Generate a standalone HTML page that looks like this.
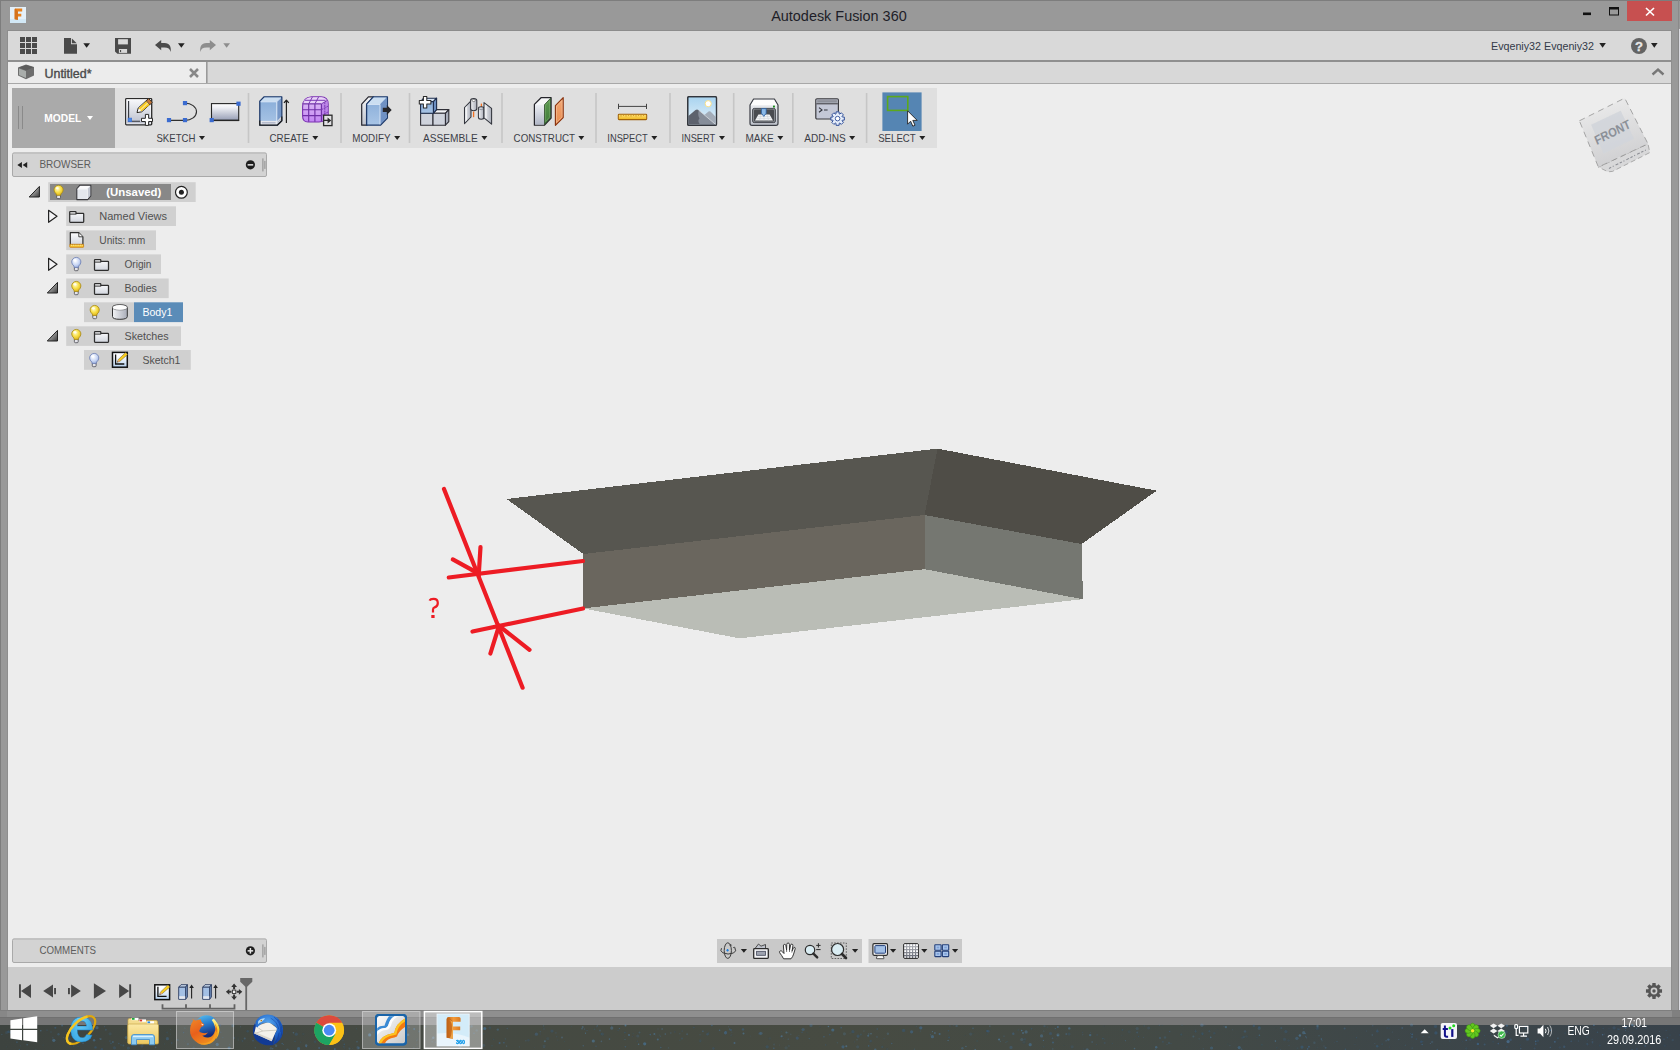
<!DOCTYPE html>
<html><head><meta charset="utf-8"><title>Autodesk Fusion 360</title>
<style>
html,body{margin:0;padding:0;background:#ededed;overflow:hidden}
svg{display:block;font-family:"Liberation Sans",sans-serif}
text{font-family:"Liberation Sans",sans-serif}
</style></head><body>
<svg width="1680" height="1050" viewBox="0 0 1680 1050">
<rect x="0" y="0" width="1680" height="1050" fill="#ededed" />
<rect x="0" y="0" width="1680" height="31" fill="#999999" />
<rect x="0" y="0" width="8" height="1050" fill="#999999" />
<rect x="1671" y="0" width="9" height="1050" fill="#999999" />
<rect x="0" y="0" width="1680" height="1" fill="#7d7d7d" />
<rect x="0" y="0" width="1" height="1050" fill="#7d7d7d" />
<rect x="1679" y="29" width="1" height="981" fill="#dcdce2" />
<rect x="1678" y="0" width="1" height="1050" fill="#8a8a8a" />
<rect x="10" y="7" width="16" height="16" fill="#e4f0f9" />
<rect x="10" y="19" width="16" height="4" fill="#d2e8f6" />
<path d="M14.6 9.4q0-1 1-1h6.6v3.1h-4.3v2.2h3.4v2.8h-3.4v3.4l-3.3-0.7z" fill="#e8821e"/><path d="M14.6 9.4q0-1 1-1l2.3 3.1v8.4l-3.3-0.7z" fill="#c8681a" opacity="0.6"/>
<text x="771.2" y="21" font-size="14.9" fill="#1e1e28" font-weight="400" text-anchor="start" textLength="135.5" lengthAdjust="spacingAndGlyphs" >Autodesk Fusion 360</text>
<rect x="1583" y="12.5" width="8" height="2.6" fill="#111" />
<rect x="1609.5" y="8" width="9" height="7" fill="none" stroke="#111" stroke-width="1"/>
<rect x="1609" y="7" width="10" height="2.5" fill="#111" />
<rect x="1627" y="1" width="45" height="20" fill="#c75050" />
<path d="M1646 8l8 7.5M1654 8l-8 7.5" stroke="#fff" stroke-width="1.7" fill="none"/>
<rect x="8" y="31" width="1663" height="29" fill="#d9d9d9" />
<rect x="8" y="30" width="1663" height="1" fill="#8c8c8c" />
<rect x="8" y="60" width="1663" height="2" fill="#8f8f8f" />
<rect x="7" y="30" width="1" height="980" fill="#8e8e8e" />
<rect x="1671" y="30" width="1" height="980" fill="#8e8e8e" />
<rect x="20" y="37" width="5" height="5" fill="#4a4a4a" />
<rect x="20" y="43" width="5" height="5" fill="#4a4a4a" />
<rect x="20" y="49" width="5" height="5" fill="#4a4a4a" />
<rect x="26" y="37" width="5" height="5" fill="#4a4a4a" />
<rect x="26" y="43" width="5" height="5" fill="#4a4a4a" />
<rect x="26" y="49" width="5" height="5" fill="#4a4a4a" />
<rect x="32" y="37" width="5" height="5" fill="#4a4a4a" />
<rect x="32" y="43" width="5" height="5" fill="#4a4a4a" />
<rect x="32" y="49" width="5" height="5" fill="#4a4a4a" />
<path d="M64 38H71V44.2H77V53.8H64z" fill="#4a4a4a"/><path d="M71.9 38.5L76.7 43.3H71.9z" fill="#4a4a4a"/>
<path d="M83.3 43.2h6.7l-3.35 4.6z" fill="#222"/>
<path d="M115 38h16v15.8h-13.6l-2.4 -2.4z" fill="#4a4a4a"/>
<rect x="118.1" y="39.2" width="9.8" height="5.2" fill="#d9d9d9" />
<rect x="118.9" y="49" width="8.2" height="3.9" fill="#d9d9d9" />
<rect x="120" y="50" width="1.1" height="2.1" fill="#4a4a4a" />
<path d="M155 45L161.2 39.9V43H164.5C169.8 43 171.2 46.8 170.8 51.9C169.9 48.9 168.2 47.5 164.5 47.5H161.2V50.3z" fill="#4a4a4a"/>
<path d="M178 43.2h6.7l-3.35 4.6z" fill="#222"/>
<path d="M216 45L209.8 39.9V43H206.5C201.2 43 199.8 46.8 200.2 51.9C201.1 48.9 202.8 47.5 206.5 47.5H209.8V50.3z" fill="#8d8d8d"/>
<path d="M223.3 43.2h6.7l-3.35 4.6z" fill="#8d8d8d"/>
<text x="1491" y="50" font-size="11" fill="#333a48" font-weight="400" text-anchor="start" textLength="103" lengthAdjust="spacingAndGlyphs" >Evqeniy32 Evqeniy32</text>
<path d="M1599.3 43h6.6l-3.3 4.8z" fill="#222"/>
<circle cx="1639" cy="46" r="8" fill="#636363"/>
<text x="1639" y="50.6" font-size="13" fill="#e8e8e8" font-weight="700" text-anchor="middle" stroke="#e8e8e8" stroke-width="0.3">?</text>
<path d="M1651 43h6.6l-3.3 4.8z" fill="#222"/>
<rect x="8" y="62" width="1663" height="21" fill="#d8d8d8" />
<rect x="8" y="62" width="198" height="21" fill="#ececec" />
<rect x="206" y="62" width="1.6" height="21" fill="#9a9a9a" />
<rect x="8" y="83" width="1663" height="1" fill="#a8a8a8" />
<path d="M18 67.5l8-3 8 2.5v8.5l-8 3.7-8-3.7z" fill="#6e6e6e"/><path d="M19 68.5l7 2.6v7l-7-3.2z" fill="#a9adab"/><path d="M18.6 67.6l7.6-2.7 7.3 2.3-7.4 3.2z" fill="#5c5c5c"/>
<text x="44.5" y="78" font-size="12" fill="#4a4a4a" font-weight="400" text-anchor="start" textLength="47" lengthAdjust="spacingAndGlyphs" stroke="#4a4a4a" stroke-width="0.35">Untitled*</text>
<path d="M190 69l8 8M198 69l-8 8" stroke="#888" stroke-width="2.5" fill="none"/>
<path d="M1652.5 74.5l5.5-5 5.5 5" stroke="#777" stroke-width="2.4" fill="none"/>
<defs>
<linearGradient id="gPlate" x1="0" y1="0" x2="0" y2="1"><stop offset="0" stop-color="#fafbfd"/><stop offset="1" stop-color="#b9bdcc"/></linearGradient>
<linearGradient id="gRect" x1="0" y1="0" x2="0" y2="1"><stop offset="0" stop-color="#ffffff"/><stop offset="0.25" stop-color="#eeeff4"/><stop offset="1" stop-color="#979eb6"/></linearGradient>
<linearGradient id="gBlueF" x1="0" y1="0" x2="0" y2="1"><stop offset="0" stop-color="#86abd8"/><stop offset="1" stop-color="#a9c5e6"/></linearGradient>
<linearGradient id="gGrey" x1="0" y1="0" x2="0" y2="1"><stop offset="0" stop-color="#f4f5f7"/><stop offset="1" stop-color="#bfc3cc"/></linearGradient>
<linearGradient id="gGreyH" x1="0" y1="0" x2="1" y2="0"><stop offset="0" stop-color="#f2f3f5"/><stop offset="1" stop-color="#a9adb8"/></linearGradient>
<linearGradient id="gPurp" x1="0" y1="0" x2="0" y2="1"><stop offset="0" stop-color="#e2c8f4"/><stop offset="1" stop-color="#c384f4"/></linearGradient>
<linearGradient id="gSky" x1="0" y1="0" x2="0" y2="1"><stop offset="0" stop-color="#a8d3ef"/><stop offset="1" stop-color="#e6f2fa"/></linearGradient>
<linearGradient id="gRuler" x1="0" y1="0" x2="0" y2="1"><stop offset="0" stop-color="#ffe27a"/><stop offset="1" stop-color="#f0b81e"/></linearGradient>
<linearGradient id="gGreen" x1="0" y1="0" x2="0" y2="1"><stop offset="0" stop-color="#5c9a52"/><stop offset="1" stop-color="#3f7a3a"/></linearGradient>
<linearGradient id="gOrange" x1="0" y1="0" x2="0" y2="1"><stop offset="0" stop-color="#f2a876"/><stop offset="1" stop-color="#e88a4e"/></linearGradient>
<linearGradient id="gGrey2" x1="0" y1="0" x2="0" y2="1"><stop offset="0" stop-color="#eceef3"/><stop offset="1" stop-color="#b0b6c6"/></linearGradient>
</defs>
<rect x="12" y="88" width="925" height="60" fill="#dfdfdf" />
<rect x="12" y="88" width="103" height="60" fill="#aaaaaa" />
<rect x="18" y="106" width="1" height="23" fill="#8a8a8a" />
<rect x="22" y="106" width="1" height="23" fill="#8a8a8a" />
<text x="44.3" y="122" font-size="10.8" fill="#ffffff" font-weight="700" text-anchor="start" textLength="37" lengthAdjust="spacingAndGlyphs" >MODEL</text>
<path d="M87 116h6l-3.0 4z" fill="#fff"/>
<rect x="247.7" y="93" width="1.6" height="50" fill="#c6c6c6" />
<rect x="340.2" y="93" width="1.6" height="50" fill="#c6c6c6" />
<rect x="408.7" y="93" width="1.6" height="50" fill="#c6c6c6" />
<rect x="501.2" y="93" width="1.6" height="50" fill="#c6c6c6" />
<rect x="595.2" y="93" width="1.6" height="50" fill="#c6c6c6" />
<rect x="669.2" y="93" width="1.6" height="50" fill="#c6c6c6" />
<rect x="732.9000000000001" y="93" width="1.6" height="50" fill="#c6c6c6" />
<rect x="792.0" y="93" width="1.6" height="50" fill="#c6c6c6" />
<rect x="865.8000000000001" y="93" width="1.6" height="50" fill="#c6c6c6" />
<text x="156.4" y="141.9" font-size="10.8" fill="#3d4048" font-weight="400" text-anchor="start" textLength="39" lengthAdjust="spacingAndGlyphs" >SKETCH</text>
<path d="M199 136h6l-3.0 4z" fill="#222"/>
<text x="269.5" y="141.9" font-size="10.8" fill="#3d4048" font-weight="400" text-anchor="start" textLength="39" lengthAdjust="spacingAndGlyphs" >CREATE</text>
<path d="M312.3 136h6l-3.0 4z" fill="#222"/>
<text x="352.3" y="141.9" font-size="10.8" fill="#3d4048" font-weight="400" text-anchor="start" textLength="38.2" lengthAdjust="spacingAndGlyphs" >MODIFY</text>
<path d="M394.2 136h6l-3.0 4z" fill="#222"/>
<text x="423" y="141.9" font-size="10.8" fill="#3d4048" font-weight="400" text-anchor="start" textLength="54.7" lengthAdjust="spacingAndGlyphs" >ASSEMBLE</text>
<path d="M481.4 136h6l-3.0 4z" fill="#222"/>
<text x="513.6" y="141.9" font-size="10.8" fill="#3d4048" font-weight="400" text-anchor="start" textLength="61.4" lengthAdjust="spacingAndGlyphs" >CONSTRUCT</text>
<path d="M578.3 136h6l-3.0 4z" fill="#222"/>
<text x="607.3" y="141.9" font-size="10.8" fill="#3d4048" font-weight="400" text-anchor="start" textLength="40.5" lengthAdjust="spacingAndGlyphs" >INSPECT</text>
<path d="M651.3 136h6l-3.0 4z" fill="#222"/>
<text x="681.4" y="141.9" font-size="10.8" fill="#3d4048" font-weight="400" text-anchor="start" textLength="33.8" lengthAdjust="spacingAndGlyphs" >INSERT</text>
<path d="M719 136h6l-3.0 4z" fill="#222"/>
<text x="745.4" y="141.9" font-size="10.8" fill="#3d4048" font-weight="400" text-anchor="start" textLength="28.4" lengthAdjust="spacingAndGlyphs" >MAKE</text>
<path d="M777.3 136h6l-3.0 4z" fill="#222"/>
<text x="804.3" y="141.9" font-size="10.8" fill="#3d4048" font-weight="400" text-anchor="start" textLength="41.4" lengthAdjust="spacingAndGlyphs" >ADD-INS</text>
<path d="M849.2 136h6l-3.0 4z" fill="#222"/>
<text x="878.2" y="141.9" font-size="10.8" fill="#3d4048" font-weight="400" text-anchor="start" textLength="37.5" lengthAdjust="spacingAndGlyphs" >SELECT</text>
<path d="M919.3 136h6l-3.0 4z" fill="#222"/>
<g transform="translate(125,98)"><rect x="0.7" y="0.6" width="26" height="26.2" rx="0.8" fill="url(#gPlate)" stroke="#2a2a2a" stroke-width="1.3"/><rect x="1.8" y="1.7" width="23.8" height="24" fill="none" stroke="#ffffff" stroke-opacity="0.7" stroke-width="0.8"/><path d="M3.6 2.9V23.3H15" stroke="#33363c" stroke-width="1.1" fill="none"/><rect x="3.1" y="20.1" width="3.6" height="3.6" fill="#4a8ae8" stroke="#3a6bd0" stroke-width="0.6"/><path d="M12 14.6L13.21 9.99L23.6 0.5L27.1 4.34L16.71 13.83z" fill="#fff" stroke="#2a2620" stroke-width="1" stroke-linejoin="round"/><path d="M13.7 10.2L21.4 3L24.9 6.84L16.5 13.3z" fill="#f8c81c"/><path d="M14.9 11.4L22.6 4.3L23.5 5.3L15.8 12.4z" fill="#fde68a"/><path d="M21.4 3L23.6 0.5L27.1 4.34L24.9 6.84z" fill="#c8783a" stroke="#2a2620" stroke-width="0.6"/><path d="M20.4 16.4h3.2v3.9h3.9v3.2h-3.9v3.9h-3.2v-3.9h-3.9v-3.2h3.9z" fill="#fff" stroke="#2a2a2a" stroke-width="1"/></g>
<g><path d="M169 120.4H185A11.5 8.65 0 0 0 185 103.1" fill="none" stroke="#303030" stroke-width="1.15"/><rect x="166.9" y="118" width="4.2" height="4.2" fill="#3a6bd0"/><rect x="182.9" y="118" width="4.2" height="4.2" fill="#3a6bd0"/><rect x="182.9" y="101" width="4.2" height="4.2" fill="#3a6bd0"/></g>
<g><rect x="211.5" y="103.6" width="27.2" height="16.6" fill="url(#gRect)" stroke="#262626" stroke-width="1.1"/><path d="M211 120.5h28.2" stroke="#262626" stroke-width="1.2"/><rect x="209.6" y="118" width="4.2" height="4.2" fill="#3a6bd0"/><rect x="236.4" y="101.6" width="4.2" height="4.2" fill="#3a6bd0"/></g>
<g transform="translate(259,96)" stroke-linejoin="round"><path d="M0.8 5.2L5.2 0.8H22.8V24.8L18.2 29.2H0.8z" fill="url(#gBlueF)" stroke="#1e3a6a" stroke-width="1.3"/><path d="M1.5 5.4L5.5 1.5H22.1L18 5.4z" fill="#cbdef1"/><path d="M18 5.4L22.1 1.5V24.5L18 28.6z" fill="#7596c6"/><path d="M1.6 5.8H17.8V28.4" fill="none" stroke="#e4eefa" stroke-width="0.9"/><path d="M17.9 5.6L21.9 1.8" stroke="#e4eefa" stroke-width="0.8"/><rect x="1.5" y="24.9" width="16.4" height="3.8" fill="#e9ebf0"/><rect x="2.8" y="25.9" width="13.8" height="1.7" fill="#b6bccd"/><path d="M18 24.9L22.1 20.8V24.5L18 28.6z" fill="#d3d7e0"/><path d="M18.8 26.2L21.4 23.6" stroke="#aeb4c4" stroke-width="0.9"/><path d="M0.8 24.6V29.2H18.2L22.8 24.8V20.6" fill="none" stroke="#222" stroke-width="1.3"/><path d="M27.4 27V4.4" stroke="#222" stroke-width="1.2"/><path d="M25 6.9L27.4 4.2L29.8 6.9" fill="none" stroke="#222" stroke-width="1.3"/></g>
<g transform="translate(302,96)"><path d="M0.6 11Q0.6 1.2 9.5 0.7H19Q26 0.7 26.2 8V18Q26.2 22.5 22.5 24.6Q20 26 17 26H6Q0.6 26 0.6 20z" fill="url(#gPurp)" stroke="#7a32b0" stroke-width="1.1"/><path d="M1 8.6Q1.5 3 7 1.4L19.5 1.2Q24 1.6 25.6 5.2L19.4 8.4H1z" fill="#ecd9fa" opacity="0.75"/><path d="M19.4 8.2L25.8 4.6V19Q25.6 22 22.6 24L19.4 25.6z" fill="#b57ce6" opacity="0.8"/><path d="M0.8 7.9H19.4M0.8 13.7H19.4M0.8 19.6H19.4M6.7 7.9V25.8M12.9 7.9V25.8M19.4 7.9V25.6" fill="none" stroke="#6f2fa6" stroke-width="1.15"/><path d="M6.7 7.9L10.4 1M12.9 7.9L16.6 0.9M19.4 7.9L25.4 4.4M3 4.3H23.6" fill="none" stroke="#7a3ab2" stroke-width="1"/><path d="M19.4 13.7L26 10.2M19.4 19.6L26 16M22.8 6.2V23.8" fill="none" stroke="#7a3ab2" stroke-width="0.95" stroke-dasharray="2 0.8"/><rect x="21.6" y="19.2" width="8.4" height="10.4" fill="#e2e2e4" stroke="#2b2b2b" stroke-width="1.3"/><path d="M21.4 23.8h4.2v-2.4l3.6 3-3.6 3v-2.4h-4.2z" fill="#2b2b2b"/></g>
<g transform="translate(361,96)" stroke-linejoin="round"><path d="M0.7 8.2L7.4 0.8H12.6L6 8.2V29.2H0.7z" fill="url(#gGrey)" stroke="#26262e" stroke-width="1.2"/><path d="M5.6 8.2L12.4 0.8H26.4V22L19.4 29.2H5.6z" fill="url(#gBlueF)" stroke="#1e3a6a" stroke-width="1.3"/><path d="M6.3 8.2L12.7 1.5H25.7L19.2 8.2z" fill="#cbdef1"/><path d="M19.2 8.2L25.7 1.5V21.7L19.2 28.5z" fill="#6f91c4"/><path d="M6.5 8.5H19V28.4" fill="none" stroke="#dfeaf8" stroke-width="0.8"/><path d="M21.8 11.8h4v-2.9l4.9 5-4.9 5v-2.9h-4z" fill="#26262a"/></g>
<g transform="translate(419,96)" stroke-linejoin="round"><rect x="1.6" y="17.3" width="12.4" height="11.9" fill="#cfd3dc" stroke="#2e2e36" stroke-width="1.1"/><path d="M14 17.3L17.4 13.6H29.8L26.4 17.3z" fill="#f3f4f7" stroke="#2e2e36" stroke-width="1.1"/><path d="M26.4 17.3L29.8 13.6V25.6L26.4 29.2z" fill="#a9aebb" stroke="#2e2e36" stroke-width="1.1"/><rect x="14" y="17.3" width="12.4" height="11.9" fill="#cfd3dc" stroke="#2e2e36" stroke-width="1.1"/><path d="M1.6 5.6L4.6 2.2H17.6L14.4 5.6z" fill="#d6e4f4" stroke="#1d2c4c" stroke-width="1.1"/><path d="M14.4 5.6L17.6 2.2V13.6L14.4 17.3z" fill="#6c8fc2" stroke="#1d2c4c" stroke-width="1.1"/><rect x="1.6" y="5.6" width="12.8" height="11.7" fill="url(#gBlueF)" stroke="#1d2c4c" stroke-width="1.1"/><path d="M4.4 0.4h3.4v4.1h4.1v3.4h-4.1v4.1h-3.4v-4.1h-4.1v-3.4h4.1z" fill="#fff" stroke="#2a2a2a" stroke-width="1.05"/></g>
<g transform="translate(464,98)" stroke-linejoin="round"><path d="M0.5 9.5L7 2.8V19L0.5 25.6z" fill="url(#gGreyH)" stroke="#33363e" stroke-width="1.05"/><path d="M2.4 8.6V22.6" stroke="#fff" stroke-opacity="0.8" stroke-width="0.9"/><path d="M6.6 2.6Q6.6 0.5 9.7 0.5Q12.8 0.5 12.8 2.6V10.6Q12.8 12.7 9.7 12.7Q6.6 12.7 6.6 10.6z" fill="url(#gGreyH)" stroke="#33363e" stroke-width="1.05"/><ellipse cx="9.7" cy="2.5" rx="1.5" ry="1.1" fill="#fff" stroke="#555" stroke-width="0.6"/><path d="M9.6 13.6V19.2" stroke="#f37021" stroke-width="1.3"/><path d="M17.4 5.6V11.4" stroke="#f37021" stroke-width="1.3"/><path d="M14.4 10.6Q14.4 8.7 17.2 8.7Q20 8.7 20 10.6V19.2Q20 21.2 17.2 21.2Q14.4 21.2 14.4 19.2z" fill="url(#gGreyH)" stroke="#33363e" stroke-width="1.05"/><path d="M14.6 10.8Q17.2 12.6 19.8 10.8" fill="none" stroke="#6a6e78" stroke-width="0.6"/><path d="M20 4.6L27.6 10.4V26.2L20 19.9z" fill="url(#gGreyH)" stroke="#33363e" stroke-width="1.05"/><path d="M22 7.4V20.4" stroke="#fff" stroke-opacity="0.8" stroke-width="0.9"/></g>
<g transform="translate(533.7,96.6)" stroke-linejoin="round"><path d="M0.7 7.8L7.6 0.9H17.4V21.4L10.6 28.6H0.7z" fill="#f6f7f9" stroke="#24242a" stroke-width="1.25"/><rect x="1.4" y="8.2" width="9" height="19.8" fill="url(#gGrey2)"/><path d="M10.8 8.1L16.8 1.7V21.2L10.8 27.8z" fill="url(#gGreen)" stroke="#2c4a2a" stroke-width="0.8"/><path d="M11.9 8.6L15.9 4.2V20.4L11.9 25z" fill="none" stroke="#9ccc8e" stroke-opacity="0.55" stroke-width="0.6"/><path d="M21.7 9L29.5 1V21L21.7 28.7z" fill="url(#gOrange)" stroke="#8a3410" stroke-width="1.15"/><path d="M22.8 9.6L28.4 3.8V20.4L22.8 26z" fill="none" stroke="#fbd8b8" stroke-opacity="0.7" stroke-width="0.6"/></g>
<g><path d="M618.5 106.4H646.5M618.5 103.8v5.2M646.5 103.8v5.2" stroke="#444" stroke-width="1" fill="none"/><rect x="618.3" y="114.2" width="28.4" height="5.4" rx="0.8" fill="url(#gRuler)" stroke="#a0620a" stroke-width="1.05"/><path d="M621 114.6v2M623.5 114.6v1.4M626 114.6v2M628.5 114.6v1.4M631 114.6v2M633.5 114.6v1.4M636 114.6v2M638.5 114.6v1.4M641 114.6v2M643.5 114.6v1.4" stroke="#c98a12" stroke-width="0.7"/></g>
<g transform="translate(687,96)"><rect x="0.7" y="0.7" width="28.8" height="28.6" rx="1" fill="url(#gSky)" stroke="#33363c" stroke-width="1.3"/><circle cx="21.2" cy="7.7" r="3.1" fill="#fff" stroke="#f8e08a" stroke-width="1"/><path d="M14 22L21.5 15.5Q22.5 14.8 23.5 15.6L28.8 21V28.6H14z" fill="#a3acb8"/><path d="M1.4 20L8.5 14Q10 13 11.5 14L28.8 28.6H1.4z" fill="#5d626d"/><path d="M11.8 14.3L28.8 28.6H13Q10 25 12.5 22.5Q10.5 19 11.8 14.3z" fill="#868d99"/><path d="M11.5 14L28.8 28.6" stroke="#dfe3e8" stroke-width="0.8"/><rect x="0.7" y="0.7" width="28.8" height="28.6" rx="1" fill="none" stroke="#33363c" stroke-width="1.1"/></g>
<g transform="translate(749,98)"><path d="M1 7L4.6 1H25.4L29 7V25.2Q29 27.3 27 27.3H3Q1 27.3 1 25.2z" fill="url(#gGrey)" stroke="#3a3d44" stroke-width="1.2" stroke-linejoin="round"/><path d="M2 7.2L5 2H25L28 7.2z" fill="#fdfdfd"/><rect x="3.6" y="10.4" width="22.8" height="14.2" rx="1.6" fill="#8d9096" stroke="#3a3d44" stroke-width="0.9"/><rect x="5" y="11.6" width="20" height="11.8" rx="1" fill="#4a4c51"/><path d="M9.4 16.6H20.6L24 22.4H6z" fill="#f2f3f5"/><path d="M8.3 18.5H21.7M7.2 20.4H22.8M12 16.6L10.5 22.4M15 16.6V22.4M18 16.6L19.5 22.4" stroke="#c9ccd2" stroke-width="0.5"/><path d="M12.4 10.6h4.8v4.6l-2.4 3.2-2.4-3.2z" fill="#8ab8e6" stroke="#2a5da0" stroke-width="0.8"/><rect x="24" y="7.6" width="1.9" height="1.9" fill="#168a16"/></g>
<g transform="translate(815,98)"><rect x="0.8" y="0.8" width="22.6" height="20.2" rx="1.2" fill="#c4c8d6" stroke="#3a3a3e" stroke-width="1.2"/><rect x="1.5" y="1.5" width="21.2" height="3.8" fill="#a3a6b0"/><rect x="2.4" y="2.3" width="19.4" height="1.8" fill="#8d9099"/><rect x="1.4" y="5.3" width="21.4" height="1" fill="#3a3a3e"/><path d="M4 9.6l3 2.3-3 2.3M9 12h3.6" stroke="#30323a" stroke-width="1.1" fill="none"/><g transform="translate(22.6,20.6)"><path d="M-1.57 -4.75L-1.51 -6.73L1.51 -6.73L1.57 -4.75L2.24 -4.47L3.70 -5.83L5.83 -3.70L4.47 -2.24L4.75 -1.57L6.73 -1.51L6.73 1.51L4.75 1.57L4.47 2.24L5.83 3.70L3.70 5.83L2.24 4.47L1.57 4.75L1.51 6.73L-1.51 6.73L-1.57 4.75L-2.24 4.47L-3.70 5.83L-5.83 3.70L-4.47 2.24L-4.75 1.57L-6.73 1.51L-6.73 -1.51L-4.75 -1.57L-4.47 -2.24L-5.83 -3.70L-3.70 -5.83L-2.24 -4.47z" fill="#e6edf9" stroke="#2f4f9a" stroke-width="1" stroke-linejoin="round"/><circle r="2.3" fill="#fff" stroke="#2f4f9a" stroke-width="0.9"/></g></g>
<rect x="882.4" y="92.4" width="39.2" height="38.6" fill="#5585b3" />
<rect x="887.6" y="96.6" width="20.2" height="13.8" fill="none" stroke="#5ca81c" stroke-width="1.6"/>
<path d="M907.6 110.8V124.2L910.6 121.2L912.8 126.2L915 125.2L912.8 120.4H917.2z" fill="#fff" stroke="#222" stroke-width="0.9" stroke-linejoin="round"/>
<defs>
<radialGradient id="gBulbOn" cx="0.4" cy="0.35" r="0.7"><stop offset="0" stop-color="#fffbd0"/><stop offset="0.5" stop-color="#f8e04a"/><stop offset="1" stop-color="#e0b416"/></radialGradient>
<radialGradient id="gBulbOff" cx="0.4" cy="0.35" r="0.7"><stop offset="0" stop-color="#ffffff"/><stop offset="0.6" stop-color="#c8d6f4"/><stop offset="1" stop-color="#93a9dc"/></radialGradient>
<linearGradient id="gFold" x1="0" y1="0" x2="0" y2="1"><stop offset="0" stop-color="#fdfdfe"/><stop offset="1" stop-color="#d2d6de"/></linearGradient><linearGradient id="gSkI" x1="0" y1="0" x2="0" y2="1"><stop offset="0.3" stop-color="#fbfcfe"/><stop offset="1" stop-color="#b4d0ee"/></linearGradient><linearGradient id="gExp" x1="0" y1="0" x2="1" y2="1"><stop offset="0.3" stop-color="#b4b4b4"/><stop offset="1" stop-color="#3c3c3c"/></linearGradient>
</defs>
<rect x="12.5" y="152.9" width="254" height="23.6" rx="1.5" fill="#d3d3d3" stroke="#a9a9a9" stroke-width="1"/>
<text x="39.4" y="168.3" font-size="10.8" fill="#5c5c5c" font-weight="400" text-anchor="start" textLength="51.5" lengthAdjust="spacingAndGlyphs" >BROWSER</text>
<circle cx="250.4" cy="164.8" r="4.6" fill="#1e1e1e"/>
<rect x="247.6" y="164.1" width="5.6" height="1.5" fill="#e6e6e6"/>
<rect x="262.4" y="158.4" width="1" height="13" fill="#8c8c8c"/><rect x="264.4" y="160.9" width="1" height="8" fill="#8c8c8c"/>
<path d="M17.3 165l4.6-3v6zM22.6 165l4.6-3v6z" fill="#222"/>
<rect x="48.2" y="182.2" width="147.5" height="19.8" fill="#d0d0d0" />
<rect x="50" y="184" width="121" height="16" fill="#888888" />
<path d="M39.4 186.4V197H29.2z" fill="url(#gExp)" stroke="#222" stroke-width="1" stroke-linejoin="round"/>
<g transform="translate(58.6,190.5)"><path d="M-1.9 4.4h3.8v2.7q0 1-1 1h-1.8q-1 0-1-1z" fill="#e4e4ea" stroke="#4a4a52" stroke-width="0.8"/><path d="M0 -5.2A4.6 4.6 0 0 1 4.6 -0.6Q4.6 1.6 2.4 3.4L2.1 4.8H-2.1L-2.4 3.4Q-4.6 1.6 -4.6 -0.6A4.6 4.6 0 0 1 0 -5.2z" fill="url(#gBulbOn)" stroke="#a88a18" stroke-width="0.8"/><ellipse cx="-1.4" cy="-2.4" rx="1.5" ry="1.2" fill="#fff" opacity="0.75"/></g>
<g transform="translate(76,184.4)" stroke-linejoin="round"><path d="M0.8 4.4L4 0.8H14.8V11.4L11.6 15.2H0.8z" fill="#e4e7ed" stroke="#3a3a3e" stroke-width="1.1"/><path d="M1.6 4.4L4.3 1.5H14L11.4 4.4z" fill="#fbfbfc"/><path d="M11.6 4.6L14.2 1.8V11.2L11.6 14.4z" fill="#c4c8d2"/><path d="M1.4 4.7H11.4V14.6" fill="none" stroke="#fff" stroke-opacity="0.8" stroke-width="0.7"/></g>
<text x="106.3" y="196" font-size="10.8" fill="#ffffff" font-weight="700" text-anchor="start" textLength="55" lengthAdjust="spacingAndGlyphs" >(Unsaved)</text>
<circle cx="181.4" cy="192.3" r="5.9" fill="#fff" stroke="#222" stroke-width="1.2"/><circle cx="181.4" cy="192.3" r="2.5" fill="#222"/>
<rect x="66.2" y="206.3" width="109.8" height="19.7" fill="#d0d0d0" />
<path d="M48.599999999999994 210.3V222.3L57.0 216.3z" fill="#f4f4f6" stroke="#222" stroke-width="1.2" stroke-linejoin="round"/>
<g transform="translate(69,211)"><path d="M0.7 10.6V1.3Q0.7 0.7 1.3 0.7H6.4Q7 0.7 7 1.3V2.4H14.1Q14.7 2.4 14.7 3V10.6Q14.7 11.3 14.1 11.3H1.3Q0.7 11.3 0.7 10.6z" fill="url(#gFold)" stroke="#2e2e2e" stroke-width="1.25"/><path d="M0.8 3.1H7.4" stroke="#2e2e2e" stroke-width="1"/></g>
<text x="99.3" y="220" font-size="10.8" fill="#505050" font-weight="400" text-anchor="start" textLength="67.7" lengthAdjust="spacingAndGlyphs" >Named Views</text>
<rect x="66.2" y="230.4" width="89.8" height="19.7" fill="#d0d0d0" />
<g transform="translate(69.6,232)"><path d="M0.7 12.5V0.7H9.2L13.3 4.8V12.5z" fill="url(#gFold)" stroke="#2e2e2e" stroke-width="1.2" stroke-linejoin="round"/><path d="M9.2 0.9V4.8H13.2" fill="#fff" stroke="#2e2e2e" stroke-width="0.9"/><rect x="0.2" y="12.3" width="13.8" height="3" rx="0.5" fill="#f8c832" stroke="#c87a0c" stroke-width="0.8"/><path d="M2 12.6v1.2M3.8 12.6v1.2M5.6 12.6v1.2M7.4 12.6v1.2M9.2 12.6v1.2M11 12.6v1.2M12.6 12.6v1.2" stroke="#fff3c0" stroke-width="0.7"/></g>
<text x="99.3" y="244" font-size="10.8" fill="#505050" font-weight="400" text-anchor="start" textLength="46" lengthAdjust="spacingAndGlyphs" >Units: mm</text>
<rect x="66.2" y="254.4" width="94.8" height="19.6" fill="#d0d0d0" />
<path d="M48.599999999999994 258.3V270.3L57.0 264.3z" fill="#f4f4f6" stroke="#222" stroke-width="1.2" stroke-linejoin="round"/>
<g transform="translate(76.3,262.6)"><path d="M-1.9 4.4h3.8v2.7q0 1-1 1h-1.8q-1 0-1-1z" fill="#e4e4ea" stroke="#4a4a52" stroke-width="0.8"/><path d="M0 -5.2A4.6 4.6 0 0 1 4.6 -0.6Q4.6 1.6 2.4 3.4L2.1 4.8H-2.1L-2.4 3.4Q-4.6 1.6 -4.6 -0.6A4.6 4.6 0 0 1 0 -5.2z" fill="url(#gBulbOff)" stroke="#6d7fb4" stroke-width="0.8"/><ellipse cx="-1.4" cy="-2.4" rx="1.5" ry="1.2" fill="#fff" opacity="0.75"/></g>
<g transform="translate(93.8,259)"><path d="M0.7 10.6V1.3Q0.7 0.7 1.3 0.7H6.4Q7 0.7 7 1.3V2.4H14.1Q14.7 2.4 14.7 3V10.6Q14.7 11.3 14.1 11.3H1.3Q0.7 11.3 0.7 10.6z" fill="url(#gFold)" stroke="#2e2e2e" stroke-width="1.25"/><path d="M0.8 3.1H7.4" stroke="#2e2e2e" stroke-width="1"/></g>
<text x="124.5" y="268" font-size="10.8" fill="#505050" font-weight="400" text-anchor="start" textLength="27" lengthAdjust="spacingAndGlyphs" >Origin</text>
<rect x="66.2" y="278.5" width="102.5" height="19.6" fill="#d0d0d0" />
<path d="M57.5 282.4V293H47.3z" fill="url(#gExp)" stroke="#222" stroke-width="1" stroke-linejoin="round"/>
<g transform="translate(76.3,286.6)"><path d="M-1.9 4.4h3.8v2.7q0 1-1 1h-1.8q-1 0-1-1z" fill="#e4e4ea" stroke="#4a4a52" stroke-width="0.8"/><path d="M0 -5.2A4.6 4.6 0 0 1 4.6 -0.6Q4.6 1.6 2.4 3.4L2.1 4.8H-2.1L-2.4 3.4Q-4.6 1.6 -4.6 -0.6A4.6 4.6 0 0 1 0 -5.2z" fill="url(#gBulbOn)" stroke="#a88a18" stroke-width="0.8"/><ellipse cx="-1.4" cy="-2.4" rx="1.5" ry="1.2" fill="#fff" opacity="0.75"/></g>
<g transform="translate(93.8,283)"><path d="M0.7 10.6V1.3Q0.7 0.7 1.3 0.7H6.4Q7 0.7 7 1.3V2.4H14.1Q14.7 2.4 14.7 3V10.6Q14.7 11.3 14.1 11.3H1.3Q0.7 11.3 0.7 10.6z" fill="url(#gFold)" stroke="#2e2e2e" stroke-width="1.25"/><path d="M0.8 3.1H7.4" stroke="#2e2e2e" stroke-width="1"/></g>
<text x="124.5" y="292" font-size="10.8" fill="#505050" font-weight="400" text-anchor="start" textLength="32.4" lengthAdjust="spacingAndGlyphs" >Bodies</text>
<rect x="84" y="302.3" width="50" height="19.8" fill="#d0d0d0" />
<rect x="134" y="302.3" width="49" height="19.8" fill="#5b8cb8" />
<g transform="translate(94.7,310.6)"><path d="M-1.9 4.4h3.8v2.7q0 1-1 1h-1.8q-1 0-1-1z" fill="#e4e4ea" stroke="#4a4a52" stroke-width="0.8"/><path d="M0 -5.2A4.6 4.6 0 0 1 4.6 -0.6Q4.6 1.6 2.4 3.4L2.1 4.8H-2.1L-2.4 3.4Q-4.6 1.6 -4.6 -0.6A4.6 4.6 0 0 1 0 -5.2z" fill="url(#gBulbOn)" stroke="#a88a18" stroke-width="0.8"/><ellipse cx="-1.4" cy="-2.4" rx="1.5" ry="1.2" fill="#fff" opacity="0.75"/></g>
<g transform="translate(111.7,304)"><path d="M0.8 3.5Q0.8 0.8 8.2 0.8Q15.6 0.8 15.6 3.5V12.5Q15.6 15.3 8.2 15.3Q0.8 15.3 0.8 12.5z" fill="url(#gGreyH)" stroke="#333" stroke-width="1"/><path d="M0.8 3.5Q0.8 6 8.2 6Q15.6 6 15.6 3.5" fill="none" stroke="#777" stroke-width="0.7"/><ellipse cx="8.2" cy="3.4" rx="7" ry="2.3" fill="#fdfdfd"/></g>
<text x="142.4" y="316" font-size="10.8" fill="#ffffff" font-weight="400" text-anchor="start" textLength="30" lengthAdjust="spacingAndGlyphs" >Body1</text>
<rect x="66.2" y="326.3" width="114.8" height="19.6" fill="#d0d0d0" />
<path d="M57.5 330.4V341H47.3z" fill="url(#gExp)" stroke="#222" stroke-width="1" stroke-linejoin="round"/>
<g transform="translate(76.3,334.6)"><path d="M-1.9 4.4h3.8v2.7q0 1-1 1h-1.8q-1 0-1-1z" fill="#e4e4ea" stroke="#4a4a52" stroke-width="0.8"/><path d="M0 -5.2A4.6 4.6 0 0 1 4.6 -0.6Q4.6 1.6 2.4 3.4L2.1 4.8H-2.1L-2.4 3.4Q-4.6 1.6 -4.6 -0.6A4.6 4.6 0 0 1 0 -5.2z" fill="url(#gBulbOn)" stroke="#a88a18" stroke-width="0.8"/><ellipse cx="-1.4" cy="-2.4" rx="1.5" ry="1.2" fill="#fff" opacity="0.75"/></g>
<g transform="translate(93.8,331)"><path d="M0.7 10.6V1.3Q0.7 0.7 1.3 0.7H6.4Q7 0.7 7 1.3V2.4H14.1Q14.7 2.4 14.7 3V10.6Q14.7 11.3 14.1 11.3H1.3Q0.7 11.3 0.7 10.6z" fill="url(#gFold)" stroke="#2e2e2e" stroke-width="1.25"/><path d="M0.8 3.1H7.4" stroke="#2e2e2e" stroke-width="1"/></g>
<text x="124.5" y="340" font-size="10.8" fill="#505050" font-weight="400" text-anchor="start" textLength="44.2" lengthAdjust="spacingAndGlyphs" >Sketches</text>
<rect x="84" y="350" width="106.8" height="19.8" fill="#d0d0d0" />
<g transform="translate(94.2,358.6)"><path d="M-1.9 4.4h3.8v2.7q0 1-1 1h-1.8q-1 0-1-1z" fill="#e4e4ea" stroke="#4a4a52" stroke-width="0.8"/><path d="M0 -5.2A4.6 4.6 0 0 1 4.6 -0.6Q4.6 1.6 2.4 3.4L2.1 4.8H-2.1L-2.4 3.4Q-4.6 1.6 -4.6 -0.6A4.6 4.6 0 0 1 0 -5.2z" fill="url(#gBulbOff)" stroke="#6d7fb4" stroke-width="0.8"/><ellipse cx="-1.4" cy="-2.4" rx="1.5" ry="1.2" fill="#fff" opacity="0.75"/></g>
<g transform="translate(111.7,351.6)"><rect x="0.8" y="0.8" width="14.8" height="14.8" fill="url(#gSkI)" stroke="#111" stroke-width="1.5"/><path d="M3.9 2.8V12.4H12.6" stroke="#111" stroke-width="1.3" fill="none"/><path d="M5.6 10.6l1-2.7 7.3-7 2 2.1-7.6 6.6z" fill="#f8cc1e" stroke="#6a5a2e" stroke-width="0.5"/><path d="M5.6 10.6l1-2.7 1.8 1.8z" fill="#e8a878"/><path d="M5.6 10.6l0.4-1 0.7 0.7z" fill="#333"/></g>
<text x="142.4" y="364" font-size="10.8" fill="#505050" font-weight="400" text-anchor="start" textLength="38" lengthAdjust="spacingAndGlyphs" >Sketch1</text>
<polygon points="583.3,608.4 924.6,569.2 1082.6,599.2 746,637.6 736,637.7" fill="#babdb6" shape-rendering="crispEdges" />
<polygon points="583.3,554 924.6,515 924.6,569.2 583.3,608.4" fill="#6a665e" shape-rendering="crispEdges" />
<polygon points="924.6,515 1081.6,544 1081.6,581 1082.6,581 1082.6,599.2 924.6,569.2" fill="#757771" shape-rendering="crispEdges" />
<polygon points="506.5,499 937.5,448.6 924.6,515 583.3,554" fill="#575650" shape-rendering="crispEdges" />
<polygon points="937.5,448.6 1156.7,490.7 1081.6,544 924.6,515" fill="#4f4d47" shape-rendering="crispEdges" />
<g stroke="#ed1c24" stroke-width="4.2" stroke-linecap="round" fill="none"><path d="M444 489L522.6 687.7"/><path d="M448.8 577.5L583 561"/><path d="M472.5 631.5L583 608.5"/><path d="M480.5 547L478.8 573.7L452.8 559.4"/><path d="M490.4 653.5L499 625.8L529.5 649.8"/></g>
<path d="M429.6 600.6Q430.4 598.8 433.6 598.8Q437.8 598.8 437.8 603Q437.8 606.4 434.6 607.4Q433 607.9 433 609.4V612.6" fill="none" stroke="#ed1c24" stroke-width="2.2"/><rect x="431.3" y="615" width="3.3" height="3" fill="#ed1c24"/>
<defs><linearGradient id="gCube" x1="0" y1="0" x2="0.3" y2="1"><stop offset="0" stop-color="#eeeeee"/><stop offset="1" stop-color="#d0d0d2"/></linearGradient></defs>
<polygon points="1598.4,167.1 1648,143.8 1649.8,152.6 1612.5,171.4 1608,171.8" fill="#d8d8d9" stroke="#909090" stroke-width="0.7" stroke-dasharray="5 3"/>
<path d="M1609 168.4L1647 149.4" stroke="#8e9096" stroke-width="1.1" stroke-dasharray="2.4 1.8 1 2.2 3 1.6"/>
<polygon points="1579.4,120.8 1624.7,98.1 1648,143.8 1598.4,167.1" fill="url(#gCube)" stroke="#8e8e8e" stroke-width="0.75" stroke-dasharray="6 4.5"/>
<polygon points="1591.1,124.7 1620.7,110.8 1634,138.8 1603.6,153.8" fill="#d2d5da" opacity="0.9"/>
<g transform="matrix(0.906,-0.454,0.38,0.926,1579.4,120.8)"><text x="26" y="29.4" font-size="12.6" font-weight="700" fill="#8b9098" text-anchor="middle" textLength="38.5" lengthAdjust="spacingAndGlyphs">FRONT</text></g>
<rect x="12.5" y="938.9" width="254" height="23.6" rx="1.5" fill="#d3d3d3" stroke="#a9a9a9" stroke-width="1"/>
<text x="39.4" y="954.3" font-size="10.8" fill="#5c5c5c" font-weight="400" text-anchor="start" textLength="56.7" lengthAdjust="spacingAndGlyphs" >COMMENTS</text>
<circle cx="250.4" cy="950.8" r="4.6" fill="#1e1e1e"/>
<rect x="247.6" y="950.1" width="5.6" height="1.5" fill="#e6e6e6"/>
<rect x="249.65" y="948.0" width="1.5" height="5.6" fill="#e6e6e6"/>
<rect x="262.4" y="944.4" width="1" height="13" fill="#8c8c8c"/><rect x="264.4" y="946.9" width="1" height="8" fill="#8c8c8c"/>
<rect x="717" y="939" width="145" height="24" fill="#c9c9c9" />
<rect x="868.5" y="939" width="93.5" height="24" fill="#c9c9c9" />
<g fill="none" stroke="#3c3c3c" stroke-width="1"><ellipse cx="727.8" cy="950.6" rx="3.6" ry="7.8"/><path d="M721.5 948.2Q719.6 950.8 722.8 952.8Q728 955.2 733.5 953Q737 951 735 948.3"/></g><path d="M726.4 950.3h2.3M727.55 949.1v2.4" stroke="#1f7fe0" stroke-width="1.2"/><path d="M729.5 945.3l1.2-1 .9 1.2M733.2 947.6l1.5-.4.4 1.4" stroke="#3c3c3c" stroke-width="0.9" fill="none"/>
<path d="M740.8 948.9h6.2l-3.1 3.8z" fill="#222"/>
<g transform="translate(753,943)"><path d="M2 5.5L5.5 1L8 3.2L12.5 1.5V5.5z" fill="#bfc3cc" stroke="#3c3c3c" stroke-width="0.9"/><rect x="0.7" y="5.6" width="14.6" height="9.8" rx="0.8" fill="#f4f5f7" stroke="#2c2c2c" stroke-width="1.3"/><rect x="3.6" y="8.3" width="8.8" height="4" fill="#9ea3b0" stroke="#44485a" stroke-width="0.8"/></g>
<g transform="translate(779.2,942.5)"><path d="M4.4 16.3Q2.5 12.8 0.5 10.3Q-0.2 9 1 8.4Q2.2 8 3.4 9.4L4.8 11L4.2 3.4Q4.1 2 5.3 1.9Q6.5 1.8 6.7 3.2L7.4 7.6L7.6 1.8Q7.7 0.5 8.9 0.5Q10.1 0.5 10.2 1.8L10.3 7.6L11.4 2.6Q11.7 1.3 12.8 1.6Q13.9 1.9 13.7 3.2L12.9 8.4L14.2 5.6Q14.8 4.4 15.6 4.9Q16.3 5.4 15.9 6.6L14.4 11.6Q13.6 14.4 11.8 16.3z" fill="#fff" stroke="#2c2c2c" stroke-width="0.95" stroke-linejoin="round"/><path d="M7.4 7.6V9.4M10.3 7.6V9.4M12.9 8.4L12.6 10" stroke="#2c2c2c" stroke-width="0.7"/></g>
<g><circle cx="810" cy="950" r="4.7" fill="#d9ecf2" stroke="#2c2c2c" stroke-width="1.2"/><path d="M813.4 953.6l3.8 3.8" stroke="#2c2c2c" stroke-width="2.4" stroke-linecap="round"/><path d="M816.2 945.4h4.4M818.4 943.2v4.4M816.2 949.6h4.4" stroke="#2c2c2c" stroke-width="1"/></g>
<g><rect x="831.3" y="943" width="15" height="15.5" fill="none" stroke="#555" stroke-width="0.9" stroke-dasharray="1.6 1.3"/><circle cx="837.6" cy="949.5" r="6" fill="#d9ecf2" stroke="#2c2c2c" stroke-width="1.2"/><path d="M842 954l4 4" stroke="#2c2c2c" stroke-width="2.6" stroke-linecap="round"/></g>
<path d="M852 948.9h6.2l-3.1 3.8z" fill="#222"/>
<g transform="translate(872.2,943)"><rect x="0.7" y="0.7" width="14.6" height="11.6" rx="1.2" fill="#f4f4f6" stroke="#2c2c2c" stroke-width="1.2"/><rect x="2.7" y="2.6" width="10.6" height="7.6" rx="0.8" fill="#a3c0e6" stroke="#24407a" stroke-width="1"/><path d="M5.2 12.6h5.6l1 2.4q0.2 0.7-0.6 0.7h-6.4q-0.8 0-0.6-0.7z" fill="#fafafa" stroke="#2c2c2c" stroke-width="0.8"/></g>
<path d="M890 948.9h6.2l-3.1 3.8z" fill="#222"/>
<defs><linearGradient id="gGridBg" x1="0" y1="0" x2="0" y2="1"><stop offset="0" stop-color="#b4b6bc"/><stop offset="1" stop-color="#5e626e"/></linearGradient></defs>
<g><rect x="903.6" y="943.6" width="14.8" height="14.8" rx="1.4" fill="url(#gGridBg)" stroke="#2c2c2c" stroke-width="1"/><rect x="904.30" y="944.30" width="1.85" height="1.85" fill="#fff" opacity="1.0"/><rect x="904.30" y="947.25" width="1.85" height="1.85" fill="#fff" opacity="1.0"/><rect x="904.30" y="950.20" width="1.85" height="1.85" fill="#fff" opacity="1.0"/><rect x="904.30" y="953.15" width="1.85" height="1.85" fill="#fff" opacity="0.85"/><rect x="904.30" y="956.10" width="1.85" height="1.85" fill="#fff" opacity="0.75"/><rect x="907.25" y="944.30" width="1.85" height="1.85" fill="#fff" opacity="1.0"/><rect x="907.25" y="947.25" width="1.85" height="1.85" fill="#fff" opacity="1.0"/><rect x="907.25" y="950.20" width="1.85" height="1.85" fill="#fff" opacity="1.0"/><rect x="907.25" y="953.15" width="1.85" height="1.85" fill="#fff" opacity="0.85"/><rect x="907.25" y="956.10" width="1.85" height="1.85" fill="#fff" opacity="0.75"/><rect x="910.20" y="944.30" width="1.85" height="1.85" fill="#fff" opacity="1.0"/><rect x="910.20" y="947.25" width="1.85" height="1.85" fill="#fff" opacity="1.0"/><rect x="910.20" y="950.20" width="1.85" height="1.85" fill="#fff" opacity="1.0"/><rect x="910.20" y="953.15" width="1.85" height="1.85" fill="#fff" opacity="0.85"/><rect x="910.20" y="956.10" width="1.85" height="1.85" fill="#fff" opacity="0.75"/><rect x="913.15" y="944.30" width="1.85" height="1.85" fill="#fff" opacity="1.0"/><rect x="913.15" y="947.25" width="1.85" height="1.85" fill="#fff" opacity="1.0"/><rect x="913.15" y="950.20" width="1.85" height="1.85" fill="#fff" opacity="1.0"/><rect x="913.15" y="953.15" width="1.85" height="1.85" fill="#fff" opacity="0.85"/><rect x="913.15" y="956.10" width="1.85" height="1.85" fill="#fff" opacity="0.75"/><rect x="916.10" y="944.30" width="1.85" height="1.85" fill="#fff" opacity="1.0"/><rect x="916.10" y="947.25" width="1.85" height="1.85" fill="#fff" opacity="1.0"/><rect x="916.10" y="950.20" width="1.85" height="1.85" fill="#fff" opacity="1.0"/><rect x="916.10" y="953.15" width="1.85" height="1.85" fill="#fff" opacity="0.85"/><rect x="916.10" y="956.10" width="1.85" height="1.85" fill="#fff" opacity="0.75"/></g>
<path d="M921.2 948.9h6.2l-3.1 3.8z" fill="#222"/>
<g><rect x="934.8" y="944.8" width="6.3" height="5.4" rx="0.5" fill="#a9c5ec" stroke="#24407a" stroke-width="1.1"/><rect x="936.6999999999999" y="946.5999999999999" width="2.5" height="1.8" fill="#7fa2d8"/><rect x="934.8" y="951.2" width="6.3" height="5.4" rx="0.5" fill="#a9c5ec" stroke="#24407a" stroke-width="1.1"/><rect x="936.6999999999999" y="953.0" width="2.5" height="1.8" fill="#7fa2d8"/><rect x="942.4" y="944.8" width="6.3" height="5.4" rx="0.5" fill="#a9c5ec" stroke="#24407a" stroke-width="1.1"/><rect x="944.3" y="946.5999999999999" width="2.5" height="1.8" fill="#7fa2d8"/><rect x="942.4" y="951.2" width="6.3" height="5.4" rx="0.5" fill="#a9c5ec" stroke="#24407a" stroke-width="1.1"/><rect x="944.3" y="953.0" width="2.5" height="1.8" fill="#7fa2d8"/></g>
<path d="M952 948.9h6.2l-3.1 3.8z" fill="#222"/>
<rect x="8" y="967" width="1663" height="43" fill="#cccccc" />
<g fill="#474747"><rect x="19" y="984.3" width="1.9" height="13.6"/><path d="M31 984.3v13.6l-10-6.8z"/><path d="M53 984.6v13l-9.8-6.5z"/><rect x="54.1" y="988" width="1.9" height="6.2"/><rect x="68" y="988" width="1.9" height="6.2"/><path d="M71.1 984.6v13l9.8-6.5z"/><path d="M93.9 983.3v15.4l12.1-7.7z"/><path d="M119.1 984.3v13.6l10-6.8z"/><rect x="129.2" y="984.3" width="1.9" height="13.6"/></g>
<g transform="translate(154,984)"><rect x="0.8" y="0.8" width="14.8" height="14.8" fill="url(#gSkI)" stroke="#111" stroke-width="1.5"/><path d="M3.9 2.8V12.4H12.6" stroke="#111" stroke-width="1.3" fill="none"/><path d="M5.6 10.6l1-2.7 7.3-7 2 2.1-7.6 6.6z" fill="#f8cc1e" stroke="#6a5a2e" stroke-width="0.5"/><path d="M5.6 10.6l1-2.7 1.8 1.8z" fill="#e8a878"/><path d="M5.6 10.6l0.4-1 0.7 0.7z" fill="#333"/></g>
<g transform="translate(178,984)" stroke-linejoin="round"><path d="M0.7 3.2L3 0.7H9.4L7.6 3.2z" fill="#d3e2f3" stroke="#2a3a5e" stroke-width="0.9"/><path d="M7.6 3.2L9.4 0.7V13L7.6 15.3z" fill="#7797c6" stroke="#2a3a5e" stroke-width="0.9"/><rect x="0.7" y="3.2" width="6.9" height="12.1" fill="#a4c0e4" stroke="#2a3a5e" stroke-width="0.9"/><rect x="1.2" y="12.2" width="6" height="2.6" fill="#e4e7ee"/><path d="M13.6 14.5V3" stroke="#222" stroke-width="1.1"/><path d="M13.6 0.6l2.3 3.4h-4.6z" fill="#222"/></g>
<g transform="translate(202,984)" stroke-linejoin="round"><path d="M0.7 3.2L3 0.7H9.4L7.6 3.2z" fill="#d3e2f3" stroke="#2a3a5e" stroke-width="0.9"/><path d="M7.6 3.2L9.4 0.7V13L7.6 15.3z" fill="#7797c6" stroke="#2a3a5e" stroke-width="0.9"/><rect x="0.7" y="3.2" width="6.9" height="12.1" fill="#a4c0e4" stroke="#2a3a5e" stroke-width="0.9"/><rect x="1.2" y="12.2" width="6" height="2.6" fill="#e4e7ee"/><path d="M13.6 14.5V3" stroke="#222" stroke-width="1.1"/><path d="M13.6 0.6l2.3 3.4h-4.6z" fill="#222"/></g>
<g transform="translate(234.1,991.8)" fill="#333"><path d="M0 -8.2l2.9 3.4h-1.9v2.2h-2v-2.2h-1.9z"/><path d="M0 8.2l2.9 -3.4h-1.9v-2.2h-2v2.2h-1.9z"/><path d="M-8.2 0l3.4 -2.9v1.9h2.2v2h-2.2v1.9z"/><path d="M8.2 0l-3.4 -2.9v1.9h-2.2v2h2.2v1.9z"/><rect x="-1.7" y="-1.7" width="3.4" height="3.4" fill="#eee" stroke="#333" stroke-width="0.9"/></g>
<path d="M240.2 978h12.1v3.8l-5.2 5h-1.7l-5.2-5z" fill="#676767"/><rect x="245.3" y="986" width="1.8" height="24" fill="#676767"/>
<path d="M162.5 1004.3v4.4H234.5v-4.4M186 1004.3v4.4M210 1004.3v4.4" fill="none" stroke="#626262" stroke-width="1.8"/>
<g transform="translate(1654,991)"><path d="M-1.77 -5.73L-1.63 -8.04L1.63 -8.04L1.77 -5.73L2.80 -5.31L4.53 -6.83L6.83 -4.53L5.31 -2.80L5.73 -1.77L8.04 -1.63L8.04 1.63L5.73 1.77L5.31 2.80L6.83 4.53L4.53 6.83L2.80 5.31L1.77 5.73L1.63 8.04L-1.63 8.04L-1.77 5.73L-2.80 5.31L-4.53 6.83L-6.83 4.53L-5.31 2.80L-5.73 1.77L-8.04 1.63L-8.04 -1.63L-5.73 -1.77L-5.31 -2.80L-6.83 -4.53L-4.53 -6.83L-2.80 -5.31z" fill="#555"/><circle r="3.4" fill="#ccc"/><circle r="1.7" fill="#555"/></g>
<defs>
<radialGradient id="gFox" cx="0.45" cy="0.35" r="0.75"><stop offset="0" stop-color="#ffd23a"/><stop offset="0.45" stop-color="#f7901e"/><stop offset="1" stop-color="#d8401a"/></radialGradient>
<radialGradient id="gGlobe" cx="0.5" cy="0.4" r="0.7"><stop offset="0" stop-color="#4a9be0"/><stop offset="1" stop-color="#1a3a8a"/></radialGradient>
<radialGradient id="gIE" cx="0.45" cy="0.35" r="0.8"><stop offset="0" stop-color="#6fd0f6"/><stop offset="1" stop-color="#1a8fd8"/></radialGradient>
<linearGradient id="gFolder" x1="0" y1="0" x2="0" y2="1"><stop offset="0" stop-color="#fbe9a6"/><stop offset="1" stop-color="#ecc860"/></linearGradient>
<linearGradient id="gOO" x1="0" y1="0" x2="1" y2="1"><stop offset="0" stop-color="#fdfdfd"/><stop offset="1" stop-color="#c8c8c8"/></linearGradient>
<linearGradient id="gF360" x1="0" y1="0" x2="0" y2="1"><stop offset="0" stop-color="#cfe8f7"/><stop offset="1" stop-color="#f4fafd"/></linearGradient>
<linearGradient id="gFo" x1="0" y1="0" x2="1" y2="0"><stop offset="0" stop-color="#c86a18"/><stop offset="0.5" stop-color="#f29a3a"/><stop offset="1" stop-color="#d87a22"/></linearGradient>
<radialGradient id="gTB" cx="0.5" cy="0.4" r="0.7"><stop offset="0" stop-color="#5aa0e8"/><stop offset="1" stop-color="#143a8a"/></radialGradient>
</defs>
<rect x="0" y="1010" width="1680" height="1" fill="#7e7e7e" />
<rect x="0" y="1011" width="1680" height="6" fill="#8f8f8f" />
<rect x="0" y="1017" width="1680" height="1" fill="#707070" />
<rect x="0" y="1018" width="1680" height="7" fill="#777777" />
<defs><linearGradient id="gWall" x1="0" y1="0" x2="1" y2="0"><stop offset="0" stop-color="#3d433f"/><stop offset="0.2" stop-color="#444942"/><stop offset="0.5" stop-color="#474b42"/><stop offset="0.7" stop-color="#434a46"/><stop offset="0.85" stop-color="#3d4649"/><stop offset="1" stop-color="#38424a"/></linearGradient><filter id="fBlur" x="-5%" y="-50%" width="110%" height="200%"><feGaussianBlur stdDeviation="0.6"/></filter></defs>
<rect x="0" y="1025" width="1680" height="25" fill="url(#gWall)" />
<rect x="0" y="1011" width="7" height="6" fill="#878787" />
<rect x="1672" y="1011" width="8" height="6" fill="#808080" />
<g filter="url(#fBlur)"><circle cx="544.0" cy="1028.8" r="1.2" fill="#2f5f90" opacity="0.12"/><circle cx="158.1" cy="1039.6" r="1" fill="#3f7fc0" opacity="0.17"/><circle cx="728.5" cy="1026.7" r="0.5" fill="#3f7fc0" opacity="0.28"/><circle cx="1389.1" cy="1028.1" r="0.6" fill="#2f5f90" opacity="0.30"/><circle cx="1592.2" cy="1039.4" r="0.8" fill="#4a8fd0" opacity="0.12"/><circle cx="78.3" cy="1046.5" r="0.8" fill="#2f5f90" opacity="0.23"/><circle cx="197.9" cy="1032.7" r="1.6" fill="#3f7fc0" opacity="0.32"/><circle cx="977.1" cy="1041.0" r="0.8" fill="#3f7fc0" opacity="0.13"/><circle cx="948.1" cy="1040.5" r="0.8" fill="#5aa0e0" opacity="0.32"/><circle cx="1305.7" cy="1036.6" r="0.8" fill="#4a8fd0" opacity="0.22"/><circle cx="1334.6" cy="1042.5" r="0.6" fill="#35689a" opacity="0.13"/><circle cx="882.3" cy="1046.9" r="1.2" fill="#2f5f90" opacity="0.24"/><circle cx="1646.7" cy="1028.0" r="0.8" fill="#35689a" opacity="0.15"/><circle cx="255.3" cy="1037.2" r="0.5" fill="#3f7fc0" opacity="0.41"/><circle cx="1284.5" cy="1039.3" r="1.6" fill="#35689a" opacity="0.20"/><circle cx="998.5" cy="1039.5" r="0.8" fill="#3f7fc0" opacity="0.12"/><circle cx="1587.1" cy="1036.9" r="1.2" fill="#35689a" opacity="0.12"/><circle cx="1087.2" cy="1049.8" r="1.6" fill="#5aa0e0" opacity="0.24"/><circle cx="1490.2" cy="1033.7" r="0.8" fill="#2f5f90" opacity="0.21"/><circle cx="196.7" cy="1026.5" r="1.6" fill="#4a8fd0" opacity="0.19"/><circle cx="668.5" cy="1047.9" r="0.8" fill="#5aa0e0" opacity="0.13"/><circle cx="674.8" cy="1031.9" r="0.6" fill="#2f5f90" opacity="0.36"/><circle cx="467.7" cy="1035.4" r="0.8" fill="#5aa0e0" opacity="0.32"/><circle cx="1609.0" cy="1028.8" r="0.6" fill="#4a8fd0" opacity="0.15"/><circle cx="20.3" cy="1045.8" r="0.6" fill="#3f7fc0" opacity="0.18"/><circle cx="244.7" cy="1038.4" r="1" fill="#4a8fd0" opacity="0.28"/><circle cx="1160.0" cy="1037.9" r="1" fill="#3f7fc0" opacity="0.31"/><circle cx="767.2" cy="1046.8" r="1.6" fill="#2f5f90" opacity="0.32"/><circle cx="659.2" cy="1035.0" r="0.5" fill="#5aa0e0" opacity="0.25"/><circle cx="104.6" cy="1026.7" r="0.6" fill="#3f7fc0" opacity="0.24"/><circle cx="571.3" cy="1026.3" r="0.5" fill="#2f5f90" opacity="0.28"/><circle cx="170.5" cy="1034.1" r="0.5" fill="#4a8fd0" opacity="0.12"/><circle cx="1031.6" cy="1028.7" r="0.8" fill="#2f5f90" opacity="0.41"/><circle cx="611.8" cy="1028.1" r="1.6" fill="#5aa0e0" opacity="0.26"/><circle cx="807.1" cy="1032.8" r="0.6" fill="#35689a" opacity="0.13"/><circle cx="1243.8" cy="1037.0" r="1.2" fill="#3f7fc0" opacity="0.15"/><circle cx="344.8" cy="1048.8" r="0.8" fill="#2f5f90" opacity="0.15"/><circle cx="1535.8" cy="1044.0" r="0.8" fill="#3f7fc0" opacity="0.41"/><circle cx="1169.6" cy="1031.5" r="0.8" fill="#35689a" opacity="0.39"/><circle cx="1296.9" cy="1038.3" r="1.6" fill="#4a8fd0" opacity="0.26"/><circle cx="1030.2" cy="1044.7" r="1.6" fill="#4a8fd0" opacity="0.37"/><circle cx="1374.8" cy="1043.5" r="0.6" fill="#5aa0e0" opacity="0.16"/><circle cx="597.3" cy="1025.7" r="0.5" fill="#5aa0e0" opacity="0.35"/><circle cx="435.4" cy="1042.3" r="0.8" fill="#35689a" opacity="0.24"/><circle cx="1604.4" cy="1034.1" r="0.6" fill="#5aa0e0" opacity="0.13"/><circle cx="330.5" cy="1030.1" r="1" fill="#2f5f90" opacity="0.42"/><circle cx="1411.9" cy="1037.0" r="1.2" fill="#3f7fc0" opacity="0.21"/><circle cx="1402.2" cy="1028.0" r="0.8" fill="#4a8fd0" opacity="0.35"/><circle cx="803.1" cy="1029.5" r="1.6" fill="#3f7fc0" opacity="0.30"/><circle cx="1345.4" cy="1049.3" r="0.8" fill="#3f7fc0" opacity="0.25"/><circle cx="1217.7" cy="1029.3" r="0.6" fill="#2f5f90" opacity="0.11"/><circle cx="1520.2" cy="1045.2" r="0.6" fill="#2f5f90" opacity="0.30"/><circle cx="1646.9" cy="1041.4" r="0.8" fill="#2f5f90" opacity="0.15"/><circle cx="220.1" cy="1025.4" r="1.2" fill="#2f5f90" opacity="0.31"/><circle cx="1259.2" cy="1028.5" r="1.6" fill="#4a8fd0" opacity="0.16"/><circle cx="47.0" cy="1030.3" r="1" fill="#2f5f90" opacity="0.18"/><circle cx="547.7" cy="1038.6" r="1.6" fill="#35689a" opacity="0.14"/><circle cx="1508.1" cy="1041.6" r="1.6" fill="#5aa0e0" opacity="0.39"/><circle cx="1389.6" cy="1047.0" r="0.6" fill="#2f5f90" opacity="0.27"/><circle cx="857.7" cy="1046.8" r="1.6" fill="#3f7fc0" opacity="0.16"/><circle cx="1303.7" cy="1028.7" r="0.6" fill="#3f7fc0" opacity="0.25"/><circle cx="934.9" cy="1033.1" r="1" fill="#5aa0e0" opacity="0.27"/><circle cx="1317.6" cy="1027.7" r="1" fill="#4a8fd0" opacity="0.12"/><circle cx="465.2" cy="1044.3" r="1" fill="#3f7fc0" opacity="0.24"/><circle cx="1276.8" cy="1047.8" r="0.8" fill="#2f5f90" opacity="0.20"/><circle cx="1018.3" cy="1030.0" r="0.8" fill="#2f5f90" opacity="0.24"/><circle cx="1356.4" cy="1037.7" r="0.6" fill="#35689a" opacity="0.32"/><circle cx="1550.3" cy="1047.3" r="0.6" fill="#4a8fd0" opacity="0.37"/><circle cx="700.0" cy="1034.8" r="0.8" fill="#4a8fd0" opacity="0.12"/><circle cx="719.6" cy="1030.3" r="0.8" fill="#4a8fd0" opacity="0.35"/><circle cx="1578.4" cy="1041.1" r="0.8" fill="#4a8fd0" opacity="0.15"/><circle cx="1625.5" cy="1030.5" r="0.5" fill="#5aa0e0" opacity="0.23"/><circle cx="273.5" cy="1041.7" r="0.6" fill="#5aa0e0" opacity="0.15"/><circle cx="1670.0" cy="1035.1" r="0.8" fill="#35689a" opacity="0.16"/><circle cx="154.9" cy="1034.1" r="0.8" fill="#5aa0e0" opacity="0.28"/><circle cx="1181.3" cy="1034.6" r="1" fill="#2f5f90" opacity="0.30"/><circle cx="1614.1" cy="1027.8" r="1.6" fill="#3f7fc0" opacity="0.17"/><circle cx="141.2" cy="1031.8" r="1.6" fill="#4a8fd0" opacity="0.16"/><circle cx="1377.2" cy="1046.2" r="1.2" fill="#35689a" opacity="0.36"/><circle cx="682.0" cy="1038.4" r="1" fill="#35689a" opacity="0.28"/><circle cx="150.3" cy="1026.4" r="1.2" fill="#3f7fc0" opacity="0.16"/><circle cx="451.8" cy="1025.4" r="0.5" fill="#3f7fc0" opacity="0.36"/><circle cx="1021.7" cy="1030.6" r="0.8" fill="#5aa0e0" opacity="0.38"/><circle cx="19.4" cy="1049.9" r="0.8" fill="#35689a" opacity="0.40"/><circle cx="1044.5" cy="1026.1" r="1.2" fill="#3f7fc0" opacity="0.18"/><circle cx="1628.3" cy="1031.5" r="0.6" fill="#35689a" opacity="0.16"/><circle cx="1056.2" cy="1038.3" r="0.6" fill="#2f5f90" opacity="0.19"/><circle cx="1129.2" cy="1031.8" r="1.6" fill="#35689a" opacity="0.11"/><circle cx="62.1" cy="1025.5" r="1" fill="#4a8fd0" opacity="0.28"/><circle cx="863.9" cy="1031.1" r="0.8" fill="#5aa0e0" opacity="0.13"/><circle cx="1102.9" cy="1038.6" r="0.8" fill="#35689a" opacity="0.41"/><circle cx="1155.4" cy="1049.6" r="0.8" fill="#4a8fd0" opacity="0.16"/><circle cx="679.9" cy="1033.7" r="0.5" fill="#3f7fc0" opacity="0.37"/><circle cx="118.8" cy="1043.5" r="0.8" fill="#3f7fc0" opacity="0.24"/><circle cx="141.9" cy="1046.0" r="1.6" fill="#35689a" opacity="0.26"/><circle cx="1005.9" cy="1042.3" r="0.5" fill="#4a8fd0" opacity="0.25"/><circle cx="452.0" cy="1025.1" r="0.8" fill="#2f5f90" opacity="0.41"/><circle cx="543.5" cy="1025.9" r="0.8" fill="#4a8fd0" opacity="0.17"/><circle cx="1.8" cy="1034.5" r="0.8" fill="#4a8fd0" opacity="0.19"/><circle cx="416.9" cy="1044.4" r="0.5" fill="#3f7fc0" opacity="0.18"/><circle cx="241.7" cy="1039.7" r="0.8" fill="#35689a" opacity="0.11"/><circle cx="1057.8" cy="1027.1" r="1" fill="#4a8fd0" opacity="0.37"/><circle cx="1104.7" cy="1042.9" r="1" fill="#35689a" opacity="0.22"/><circle cx="1210.7" cy="1037.4" r="0.8" fill="#4a8fd0" opacity="0.33"/><circle cx="73.6" cy="1045.9" r="1" fill="#2f5f90" opacity="0.30"/><circle cx="234.0" cy="1038.1" r="1" fill="#3f7fc0" opacity="0.28"/><circle cx="1388.4" cy="1039.6" r="1.2" fill="#4a8fd0" opacity="0.32"/><circle cx="143.0" cy="1026.0" r="1.2" fill="#3f7fc0" opacity="0.22"/><circle cx="632.7" cy="1036.3" r="0.5" fill="#2f5f90" opacity="0.30"/><circle cx="1143.5" cy="1037.2" r="0.5" fill="#3f7fc0" opacity="0.25"/><circle cx="1257.1" cy="1037.6" r="1" fill="#2f5f90" opacity="0.13"/><circle cx="111.0" cy="1043.4" r="0.8" fill="#35689a" opacity="0.36"/><circle cx="394.4" cy="1043.9" r="0.6" fill="#5aa0e0" opacity="0.34"/><circle cx="829.8" cy="1034.6" r="0.8" fill="#35689a" opacity="0.39"/><circle cx="1288.5" cy="1040.4" r="1.2" fill="#2f5f90" opacity="0.16"/><circle cx="247.7" cy="1031.3" r="1.2" fill="#2f5f90" opacity="0.32"/><circle cx="953.8" cy="1025.3" r="0.5" fill="#3f7fc0" opacity="0.26"/><circle cx="1162.9" cy="1041.9" r="0.8" fill="#35689a" opacity="0.33"/><circle cx="780.6" cy="1036.7" r="0.5" fill="#2f5f90" opacity="0.42"/><circle cx="334.7" cy="1049.5" r="0.8" fill="#5aa0e0" opacity="0.11"/><circle cx="128.5" cy="1037.7" r="0.8" fill="#5aa0e0" opacity="0.42"/><circle cx="352.5" cy="1048.6" r="0.6" fill="#3f7fc0" opacity="0.12"/><circle cx="238.1" cy="1038.1" r="0.8" fill="#2f5f90" opacity="0.14"/><circle cx="469.7" cy="1027.8" r="0.8" fill="#5aa0e0" opacity="0.17"/><circle cx="662.1" cy="1029.0" r="0.8" fill="#5aa0e0" opacity="0.32"/><circle cx="507.3" cy="1028.5" r="0.8" fill="#3f7fc0" opacity="0.22"/><circle cx="1411.6" cy="1025.0" r="1.6" fill="#5aa0e0" opacity="0.21"/><circle cx="201.7" cy="1048.2" r="1.2" fill="#35689a" opacity="0.10"/><circle cx="425.4" cy="1026.6" r="0.8" fill="#2f5f90" opacity="0.42"/><circle cx="128.4" cy="1048.1" r="1.6" fill="#3f7fc0" opacity="0.19"/><circle cx="471.5" cy="1026.3" r="1.2" fill="#4a8fd0" opacity="0.19"/><circle cx="418.9" cy="1031.6" r="1" fill="#35689a" opacity="0.20"/><circle cx="1319.0" cy="1035.7" r="0.5" fill="#5aa0e0" opacity="0.36"/><circle cx="1534.6" cy="1048.5" r="1" fill="#3f7fc0" opacity="0.17"/><circle cx="83.1" cy="1043.3" r="0.8" fill="#4a8fd0" opacity="0.30"/><circle cx="1082.7" cy="1032.2" r="0.5" fill="#2f5f90" opacity="0.39"/><circle cx="213.9" cy="1036.8" r="0.8" fill="#35689a" opacity="0.19"/><circle cx="1241.6" cy="1049.4" r="0.8" fill="#4a8fd0" opacity="0.23"/><circle cx="505.4" cy="1038.9" r="0.8" fill="#4a8fd0" opacity="0.14"/><circle cx="126.3" cy="1037.5" r="1.6" fill="#4a8fd0" opacity="0.26"/><circle cx="761.0" cy="1033.3" r="1.6" fill="#4a8fd0" opacity="0.24"/><circle cx="920.3" cy="1031.1" r="0.6" fill="#3f7fc0" opacity="0.21"/><circle cx="536.4" cy="1034.2" r="1.6" fill="#3f7fc0" opacity="0.28"/><circle cx="1259.4" cy="1035.3" r="0.8" fill="#4a8fd0" opacity="0.34"/><circle cx="633.1" cy="1033.5" r="0.5" fill="#2f5f90" opacity="0.26"/><circle cx="1625.7" cy="1028.1" r="1" fill="#4a8fd0" opacity="0.27"/><circle cx="155.6" cy="1047.4" r="0.8" fill="#5aa0e0" opacity="0.23"/><circle cx="725.5" cy="1032.8" r="1.6" fill="#3f7fc0" opacity="0.38"/><circle cx="213.8" cy="1035.6" r="1.6" fill="#5aa0e0" opacity="0.39"/><circle cx="1626.7" cy="1037.2" r="0.5" fill="#2f5f90" opacity="0.23"/><circle cx="1437.2" cy="1049.3" r="0.6" fill="#4a8fd0" opacity="0.35"/><circle cx="259.4" cy="1038.1" r="1.2" fill="#5aa0e0" opacity="0.13"/><circle cx="142.8" cy="1044.4" r="0.5" fill="#4a8fd0" opacity="0.35"/><circle cx="956.6" cy="1025.9" r="1.2" fill="#4a8fd0" opacity="0.20"/><circle cx="1052.5" cy="1038.2" r="0.8" fill="#3f7fc0" opacity="0.32"/><circle cx="167.1" cy="1032.5" r="1" fill="#35689a" opacity="0.16"/><circle cx="375.6" cy="1040.0" r="0.5" fill="#5aa0e0" opacity="0.27"/><circle cx="468.1" cy="1032.9" r="1.6" fill="#5aa0e0" opacity="0.38"/><circle cx="884.1" cy="1038.7" r="0.5" fill="#35689a" opacity="0.41"/><circle cx="92.9" cy="1029.9" r="1.2" fill="#3f7fc0" opacity="0.31"/><circle cx="432.2" cy="1041.7" r="0.8" fill="#3f7fc0" opacity="0.17"/><circle cx="1169.0" cy="1043.0" r="0.8" fill="#4a8fd0" opacity="0.32"/><circle cx="11.3" cy="1032.3" r="1.6" fill="#4a8fd0" opacity="0.26"/><circle cx="832.8" cy="1030.0" r="1.6" fill="#4a8fd0" opacity="0.36"/><circle cx="781.4" cy="1031.6" r="0.8" fill="#2f5f90" opacity="0.13"/><circle cx="832.9" cy="1029.7" r="0.6" fill="#3f7fc0" opacity="0.26"/><circle cx="1593.9" cy="1028.7" r="0.8" fill="#3f7fc0" opacity="0.12"/><circle cx="1636.5" cy="1028.5" r="0.5" fill="#4a8fd0" opacity="0.33"/><circle cx="660.8" cy="1047.5" r="0.8" fill="#3f7fc0" opacity="0.33"/><circle cx="1565.1" cy="1033.2" r="0.6" fill="#2f5f90" opacity="0.31"/><circle cx="1253.8" cy="1025.8" r="1.2" fill="#35689a" opacity="0.33"/><circle cx="1654.8" cy="1036.1" r="0.5" fill="#35689a" opacity="0.10"/><circle cx="135.7" cy="1035.5" r="0.5" fill="#4a8fd0" opacity="0.28"/><circle cx="638.6" cy="1044.2" r="0.8" fill="#5aa0e0" opacity="0.36"/><circle cx="147.4" cy="1042.6" r="0.6" fill="#5aa0e0" opacity="0.22"/><circle cx="324.3" cy="1034.1" r="0.8" fill="#5aa0e0" opacity="0.11"/><circle cx="416.7" cy="1040.6" r="0.8" fill="#3f7fc0" opacity="0.11"/><circle cx="779.6" cy="1045.1" r="0.5" fill="#3f7fc0" opacity="0.18"/><circle cx="1509.6" cy="1033.5" r="0.8" fill="#2f5f90" opacity="0.21"/><circle cx="73.2" cy="1043.7" r="1.2" fill="#35689a" opacity="0.20"/><circle cx="499.6" cy="1043.0" r="1" fill="#3f7fc0" opacity="0.39"/><circle cx="40.8" cy="1030.8" r="0.8" fill="#5aa0e0" opacity="0.33"/><circle cx="1602.6" cy="1034.7" r="0.8" fill="#5aa0e0" opacity="0.39"/><circle cx="222.9" cy="1037.4" r="0.5" fill="#35689a" opacity="0.36"/><circle cx="1382.2" cy="1044.3" r="1" fill="#35689a" opacity="0.18"/><circle cx="774.1" cy="1044.6" r="1" fill="#4a8fd0" opacity="0.13"/><circle cx="658.0" cy="1029.0" r="0.8" fill="#3f7fc0" opacity="0.12"/><circle cx="809.2" cy="1038.6" r="0.6" fill="#3f7fc0" opacity="0.41"/><circle cx="1659.5" cy="1031.6" r="0.5" fill="#5aa0e0" opacity="0.17"/><circle cx="837.4" cy="1042.7" r="0.8" fill="#4a8fd0" opacity="0.16"/><circle cx="700.3" cy="1040.5" r="1.2" fill="#2f5f90" opacity="0.18"/><circle cx="1422.9" cy="1041.6" r="0.5" fill="#35689a" opacity="0.35"/><circle cx="493.6" cy="1039.2" r="0.8" fill="#35689a" opacity="0.18"/><circle cx="334.6" cy="1031.2" r="0.6" fill="#35689a" opacity="0.18"/><circle cx="1485.4" cy="1039.5" r="0.8" fill="#35689a" opacity="0.12"/><circle cx="1667.3" cy="1037.7" r="0.6" fill="#3f7fc0" opacity="0.31"/><circle cx="1097.6" cy="1049.8" r="0.5" fill="#4a8fd0" opacity="0.10"/><circle cx="1412.1" cy="1047.9" r="0.5" fill="#4a8fd0" opacity="0.38"/><circle cx="200.3" cy="1029.7" r="1.6" fill="#3f7fc0" opacity="0.29"/><circle cx="625.4" cy="1046.7" r="0.8" fill="#3f7fc0" opacity="0.29"/><circle cx="177.7" cy="1039.9" r="1" fill="#3f7fc0" opacity="0.21"/><circle cx="619.4" cy="1028.5" r="0.6" fill="#3f7fc0" opacity="0.42"/><circle cx="1007.0" cy="1041.3" r="0.6" fill="#35689a" opacity="0.36"/><circle cx="687.1" cy="1034.3" r="1" fill="#4a8fd0" opacity="0.20"/><circle cx="52.9" cy="1037.4" r="0.8" fill="#3f7fc0" opacity="0.12"/><circle cx="1337.0" cy="1041.6" r="0.6" fill="#3f7fc0" opacity="0.30"/><circle cx="1097.1" cy="1034.9" r="0.8" fill="#35689a" opacity="0.23"/><circle cx="1121.9" cy="1035.4" r="0.5" fill="#2f5f90" opacity="0.20"/><circle cx="1484.6" cy="1035.4" r="0.5" fill="#35689a" opacity="0.38"/><circle cx="1082.7" cy="1034.8" r="0.8" fill="#3f7fc0" opacity="0.17"/><circle cx="729.4" cy="1028.9" r="0.5" fill="#5aa0e0" opacity="0.36"/><circle cx="970.7" cy="1034.1" r="1.6" fill="#3f7fc0" opacity="0.15"/><circle cx="86.8" cy="1028.6" r="1.6" fill="#3f7fc0" opacity="0.39"/><circle cx="962.4" cy="1048.2" r="1.2" fill="#4a8fd0" opacity="0.26"/><circle cx="584.5" cy="1029.0" r="0.6" fill="#3f7fc0" opacity="0.40"/><circle cx="644.7" cy="1043.8" r="1.6" fill="#4a8fd0" opacity="0.41"/><circle cx="506.7" cy="1045.9" r="0.5" fill="#5aa0e0" opacity="0.41"/><circle cx="528.4" cy="1040.2" r="1.2" fill="#2f5f90" opacity="0.22"/><circle cx="1156.2" cy="1047.3" r="1.2" fill="#4a8fd0" opacity="0.35"/><circle cx="1043.4" cy="1040.4" r="0.6" fill="#4a8fd0" opacity="0.37"/><circle cx="949.9" cy="1026.0" r="1" fill="#35689a" opacity="0.15"/><circle cx="206.7" cy="1031.2" r="1.2" fill="#4a8fd0" opacity="0.36"/><circle cx="69.0" cy="1039.1" r="1.6" fill="#35689a" opacity="0.32"/><circle cx="197.8" cy="1040.0" r="1" fill="#35689a" opacity="0.37"/><circle cx="1090.4" cy="1032.7" r="0.6" fill="#35689a" opacity="0.24"/><circle cx="750.6" cy="1036.0" r="0.5" fill="#5aa0e0" opacity="0.10"/><circle cx="781.7" cy="1036.2" r="1" fill="#5aa0e0" opacity="0.35"/><circle cx="1405.4" cy="1045.3" r="0.8" fill="#4a8fd0" opacity="0.13"/><circle cx="602.4" cy="1034.1" r="1.6" fill="#2f5f90" opacity="0.24"/><circle cx="1103.9" cy="1026.0" r="0.6" fill="#35689a" opacity="0.13"/><circle cx="1306.4" cy="1037.8" r="0.5" fill="#5aa0e0" opacity="0.34"/><circle cx="1096.6" cy="1044.6" r="0.5" fill="#2f5f90" opacity="0.37"/><circle cx="1229.9" cy="1045.4" r="0.6" fill="#5aa0e0" opacity="0.14"/><circle cx="483.6" cy="1045.3" r="1.6" fill="#4a8fd0" opacity="0.15"/><circle cx="110.1" cy="1033.8" r="1.6" fill="#35689a" opacity="0.18"/><circle cx="1506.2" cy="1031.9" r="1.6" fill="#35689a" opacity="0.25"/><circle cx="843.7" cy="1048.0" r="0.6" fill="#2f5f90" opacity="0.29"/><circle cx="850.1" cy="1033.0" r="0.5" fill="#5aa0e0" opacity="0.16"/><circle cx="270.9" cy="1048.4" r="1.2" fill="#5aa0e0" opacity="0.20"/><circle cx="283.5" cy="1044.6" r="0.5" fill="#3f7fc0" opacity="0.35"/><circle cx="1069.0" cy="1034.0" r="1.6" fill="#2f5f90" opacity="0.24"/><circle cx="974.5" cy="1047.1" r="0.5" fill="#2f5f90" opacity="0.18"/><circle cx="1058.0" cy="1034.9" r="1.6" fill="#5aa0e0" opacity="0.22"/><circle cx="1664.0" cy="1039.4" r="0.8" fill="#3f7fc0" opacity="0.21"/><circle cx="743.0" cy="1029.4" r="1.2" fill="#35689a" opacity="0.41"/><circle cx="1377.3" cy="1031.3" r="1.2" fill="#2f5f90" opacity="0.41"/><circle cx="1559.8" cy="1047.4" r="1.2" fill="#3f7fc0" opacity="0.10"/><circle cx="372.4" cy="1032.3" r="1.2" fill="#2f5f90" opacity="0.24"/><circle cx="611.7" cy="1026.2" r="0.8" fill="#3f7fc0" opacity="0.17"/><circle cx="37.4" cy="1025.1" r="0.8" fill="#2f5f90" opacity="0.20"/><circle cx="600.0" cy="1030.6" r="1" fill="#4a8fd0" opacity="0.20"/><circle cx="343.0" cy="1040.6" r="0.8" fill="#3f7fc0" opacity="0.15"/><circle cx="1573.5" cy="1031.1" r="0.6" fill="#3f7fc0" opacity="0.24"/><circle cx="1072.2" cy="1046.8" r="1.6" fill="#35689a" opacity="0.19"/><circle cx="1624.8" cy="1026.4" r="1.6" fill="#35689a" opacity="0.28"/><circle cx="999.1" cy="1039.5" r="1" fill="#5aa0e0" opacity="0.40"/><circle cx="417.5" cy="1047.6" r="0.5" fill="#3f7fc0" opacity="0.12"/><circle cx="682.1" cy="1030.9" r="0.5" fill="#3f7fc0" opacity="0.39"/><circle cx="20.7" cy="1038.8" r="0.6" fill="#4a8fd0" opacity="0.15"/><circle cx="870.7" cy="1041.1" r="1.2" fill="#2f5f90" opacity="0.31"/><circle cx="293.4" cy="1032.7" r="0.8" fill="#5aa0e0" opacity="0.30"/><circle cx="1201.9" cy="1025.2" r="1.6" fill="#5aa0e0" opacity="0.24"/><circle cx="135.2" cy="1041.4" r="0.6" fill="#3f7fc0" opacity="0.17"/><circle cx="439.2" cy="1041.1" r="0.5" fill="#35689a" opacity="0.21"/><circle cx="1195.6" cy="1031.6" r="1" fill="#2f5f90" opacity="0.32"/><circle cx="1632.8" cy="1032.4" r="0.6" fill="#2f5f90" opacity="0.13"/><circle cx="25.6" cy="1031.5" r="0.6" fill="#4a8fd0" opacity="0.37"/><circle cx="1587.1" cy="1043.7" r="0.8" fill="#5aa0e0" opacity="0.16"/><circle cx="552.0" cy="1031.0" r="1.6" fill="#2f5f90" opacity="0.30"/><circle cx="788.7" cy="1046.0" r="1.2" fill="#3f7fc0" opacity="0.10"/><circle cx="734.5" cy="1043.1" r="1" fill="#4a8fd0" opacity="0.38"/><circle cx="657.8" cy="1039.6" r="1" fill="#4a8fd0" opacity="0.39"/><circle cx="55.3" cy="1027.8" r="1" fill="#35689a" opacity="0.40"/><circle cx="1642.0" cy="1042.5" r="0.5" fill="#3f7fc0" opacity="0.11"/><circle cx="1171.0" cy="1043.4" r="0.5" fill="#35689a" opacity="0.37"/><circle cx="334.8" cy="1048.9" r="1" fill="#3f7fc0" opacity="0.39"/><circle cx="1477.9" cy="1043.9" r="1.2" fill="#3f7fc0" opacity="0.40"/><circle cx="414.3" cy="1030.1" r="0.5" fill="#3f7fc0" opacity="0.11"/><circle cx="1386.1" cy="1040.8" r="0.8" fill="#4a8fd0" opacity="0.25"/><circle cx="164.4" cy="1043.9" r="0.6" fill="#35689a" opacity="0.19"/><circle cx="711.9" cy="1025.5" r="0.8" fill="#3f7fc0" opacity="0.40"/><circle cx="1202.5" cy="1034.2" r="0.8" fill="#2f5f90" opacity="0.35"/><circle cx="846.3" cy="1046.3" r="1" fill="#5aa0e0" opacity="0.34"/><circle cx="52.5" cy="1038.0" r="0.5" fill="#3f7fc0" opacity="0.21"/><circle cx="903.6" cy="1030.4" r="1.6" fill="#2f5f90" opacity="0.36"/><circle cx="1377.3" cy="1029.3" r="0.5" fill="#35689a" opacity="0.27"/><circle cx="1280.5" cy="1049.4" r="0.5" fill="#3f7fc0" opacity="0.21"/><circle cx="825.7" cy="1044.9" r="0.6" fill="#2f5f90" opacity="0.41"/><circle cx="583.3" cy="1045.8" r="0.8" fill="#4a8fd0" opacity="0.28"/><circle cx="476.7" cy="1030.4" r="1.2" fill="#4a8fd0" opacity="0.17"/><circle cx="184.7" cy="1040.9" r="0.5" fill="#2f5f90" opacity="0.26"/><circle cx="1322.0" cy="1040.7" r="0.8" fill="#5aa0e0" opacity="0.13"/><circle cx="1498.3" cy="1043.6" r="0.8" fill="#3f7fc0" opacity="0.38"/><circle cx="624.9" cy="1032.6" r="0.8" fill="#2f5f90" opacity="0.39"/><circle cx="287.5" cy="1049.6" r="1.2" fill="#5aa0e0" opacity="0.17"/><circle cx="213.2" cy="1039.9" r="1.2" fill="#3f7fc0" opacity="0.34"/><circle cx="585.5" cy="1033.2" r="0.6" fill="#5aa0e0" opacity="0.38"/><circle cx="1112.3" cy="1043.5" r="0.6" fill="#35689a" opacity="0.25"/><circle cx="973.0" cy="1028.2" r="0.8" fill="#4a8fd0" opacity="0.31"/><circle cx="852.9" cy="1031.7" r="1.6" fill="#2f5f90" opacity="0.33"/><circle cx="259.7" cy="1028.9" r="0.6" fill="#2f5f90" opacity="0.33"/><circle cx="877.3" cy="1029.0" r="0.8" fill="#35689a" opacity="0.41"/><circle cx="1638.2" cy="1043.2" r="0.5" fill="#3f7fc0" opacity="0.15"/><circle cx="328.3" cy="1028.8" r="0.6" fill="#35689a" opacity="0.35"/><circle cx="730.7" cy="1029.9" r="1.2" fill="#35689a" opacity="0.39"/><circle cx="346.8" cy="1034.7" r="0.5" fill="#5aa0e0" opacity="0.10"/><circle cx="1165.0" cy="1037.5" r="1.2" fill="#3f7fc0" opacity="0.19"/><circle cx="238.2" cy="1040.1" r="0.8" fill="#4a8fd0" opacity="0.10"/><circle cx="1525.4" cy="1035.8" r="1" fill="#5aa0e0" opacity="0.29"/><circle cx="1421.3" cy="1041.7" r="1.2" fill="#2f5f90" opacity="0.38"/><circle cx="1432.1" cy="1042.0" r="1.2" fill="#5aa0e0" opacity="0.14"/><circle cx="525.9" cy="1040.7" r="0.5" fill="#4a8fd0" opacity="0.39"/><circle cx="1314.4" cy="1042.8" r="1.2" fill="#5aa0e0" opacity="0.15"/><circle cx="811.0" cy="1025.5" r="1.6" fill="#4a8fd0" opacity="0.23"/><circle cx="1502.8" cy="1033.2" r="0.5" fill="#5aa0e0" opacity="0.22"/><circle cx="1525.8" cy="1027.7" r="0.8" fill="#4a8fd0" opacity="0.27"/><circle cx="1203.2" cy="1048.8" r="0.6" fill="#3f7fc0" opacity="0.27"/><circle cx="1423.2" cy="1036.4" r="0.6" fill="#2f5f90" opacity="0.33"/><circle cx="27.1" cy="1044.8" r="0.8" fill="#5aa0e0" opacity="0.27"/><circle cx="1246.7" cy="1036.4" r="1.2" fill="#2f5f90" opacity="0.16"/><circle cx="1281.3" cy="1028.1" r="1" fill="#3f7fc0" opacity="0.21"/><circle cx="424.1" cy="1034.5" r="0.5" fill="#5aa0e0" opacity="0.10"/><circle cx="1537.9" cy="1040.7" r="1.2" fill="#35689a" opacity="0.21"/><circle cx="183.6" cy="1032.6" r="0.8" fill="#2f5f90" opacity="0.40"/><circle cx="1632.1" cy="1049.9" r="0.8" fill="#4a8fd0" opacity="0.25"/><circle cx="217.2" cy="1044.4" r="1.6" fill="#4a8fd0" opacity="0.36"/><circle cx="788.2" cy="1039.1" r="0.6" fill="#4a8fd0" opacity="0.36"/><circle cx="593.3" cy="1041.0" r="1.6" fill="#5aa0e0" opacity="0.35"/><circle cx="786.4" cy="1032.4" r="1" fill="#5aa0e0" opacity="0.31"/><circle cx="596.0" cy="1046.3" r="0.8" fill="#35689a" opacity="0.33"/><circle cx="1651.3" cy="1042.0" r="0.8" fill="#35689a" opacity="0.10"/><circle cx="601.4" cy="1041.4" r="0.8" fill="#5aa0e0" opacity="0.25"/><circle cx="1047.3" cy="1027.1" r="0.8" fill="#35689a" opacity="0.15"/><circle cx="1435.5" cy="1026.4" r="1.6" fill="#35689a" opacity="0.28"/><circle cx="1317.2" cy="1028.5" r="1.6" fill="#2f5f90" opacity="0.21"/><circle cx="25.2" cy="1025.3" r="0.5" fill="#35689a" opacity="0.31"/><circle cx="1021.8" cy="1039.5" r="1.6" fill="#5aa0e0" opacity="0.17"/><circle cx="582.0" cy="1028.8" r="0.8" fill="#4a8fd0" opacity="0.35"/><circle cx="1024.0" cy="1042.2" r="1.6" fill="#2f5f90" opacity="0.13"/><circle cx="1324.0" cy="1046.0" r="0.6" fill="#4a8fd0" opacity="0.26"/><circle cx="891.7" cy="1043.5" r="0.8" fill="#3f7fc0" opacity="0.31"/><circle cx="932.5" cy="1031.6" r="0.6" fill="#5aa0e0" opacity="0.36"/><circle cx="828.4" cy="1026.5" r="0.8" fill="#5aa0e0" opacity="0.39"/><circle cx="414.2" cy="1029.1" r="1" fill="#3f7fc0" opacity="0.38"/><circle cx="269.4" cy="1033.0" r="1.2" fill="#35689a" opacity="0.28"/><circle cx="1412.2" cy="1034.4" r="0.8" fill="#3f7fc0" opacity="0.42"/><circle cx="303.3" cy="1034.0" r="1.2" fill="#2f5f90" opacity="0.11"/><circle cx="77.1" cy="1043.4" r="0.8" fill="#3f7fc0" opacity="0.36"/><circle cx="857.9" cy="1037.1" r="0.6" fill="#5aa0e0" opacity="0.11"/><circle cx="1050.5" cy="1033.5" r="1.6" fill="#35689a" opacity="0.31"/><circle cx="797.2" cy="1038.1" r="1.6" fill="#35689a" opacity="0.39"/><circle cx="731.1" cy="1035.6" r="1" fill="#35689a" opacity="0.12"/><circle cx="492.0" cy="1045.7" r="0.8" fill="#35689a" opacity="0.21"/><circle cx="1466.6" cy="1033.6" r="0.6" fill="#3f7fc0" opacity="0.31"/><circle cx="555.9" cy="1032.9" r="0.8" fill="#3f7fc0" opacity="0.14"/><circle cx="1317.5" cy="1026.0" r="1.2" fill="#5aa0e0" opacity="0.28"/><circle cx="916.3" cy="1026.2" r="0.8" fill="#3f7fc0" opacity="0.13"/><circle cx="319.1" cy="1048.0" r="1" fill="#3f7fc0" opacity="0.35"/><circle cx="1325.6" cy="1047.7" r="1" fill="#4a8fd0" opacity="0.22"/><circle cx="1053.0" cy="1042.4" r="1" fill="#3f7fc0" opacity="0.38"/><circle cx="357.0" cy="1041.7" r="0.8" fill="#4a8fd0" opacity="0.30"/><circle cx="170.3" cy="1029.5" r="0.5" fill="#3f7fc0" opacity="0.23"/><circle cx="1535.7" cy="1041.4" r="0.8" fill="#4a8fd0" opacity="0.38"/><circle cx="1321.4" cy="1039.1" r="0.8" fill="#4a8fd0" opacity="0.38"/><circle cx="708.6" cy="1033.0" r="0.8" fill="#2f5f90" opacity="0.28"/><circle cx="1568.9" cy="1026.4" r="1" fill="#3f7fc0" opacity="0.27"/><circle cx="1299.9" cy="1035.5" r="1.2" fill="#5aa0e0" opacity="0.39"/><circle cx="112.9" cy="1042.0" r="1" fill="#4a8fd0" opacity="0.29"/><circle cx="798.8" cy="1035.3" r="0.5" fill="#5aa0e0" opacity="0.13"/><circle cx="356.6" cy="1028.8" r="0.5" fill="#3f7fc0" opacity="0.24"/><circle cx="1148.7" cy="1028.0" r="1.6" fill="#3f7fc0" opacity="0.13"/><circle cx="216.7" cy="1025.4" r="1.2" fill="#5aa0e0" opacity="0.28"/><circle cx="1232.4" cy="1029.7" r="0.5" fill="#4a8fd0" opacity="0.22"/><circle cx="1225.9" cy="1027.1" r="1.2" fill="#5aa0e0" opacity="0.28"/><circle cx="773.8" cy="1048.3" r="0.8" fill="#3f7fc0" opacity="0.39"/><circle cx="1204.9" cy="1025.3" r="0.5" fill="#2f5f90" opacity="0.38"/><circle cx="133.9" cy="1032.8" r="1.2" fill="#5aa0e0" opacity="0.29"/><circle cx="1023.0" cy="1032.9" r="1" fill="#5aa0e0" opacity="0.33"/><circle cx="1137.2" cy="1028.6" r="1.6" fill="#4a8fd0" opacity="0.14"/><circle cx="1057.9" cy="1035.4" r="0.8" fill="#5aa0e0" opacity="0.35"/><circle cx="1587.5" cy="1044.6" r="1" fill="#35689a" opacity="0.21"/><circle cx="101.9" cy="1049.3" r="1.2" fill="#2f5f90" opacity="0.36"/><circle cx="557.8" cy="1040.1" r="0.5" fill="#2f5f90" opacity="0.37"/><circle cx="1398.8" cy="1039.6" r="0.6" fill="#5aa0e0" opacity="0.22"/><circle cx="1011.0" cy="1047.4" r="1.6" fill="#3f7fc0" opacity="0.24"/><circle cx="540.2" cy="1031.7" r="0.6" fill="#3f7fc0" opacity="0.29"/><circle cx="484.7" cy="1028.5" r="1.6" fill="#4a8fd0" opacity="0.42"/><circle cx="460.1" cy="1046.3" r="1.6" fill="#5aa0e0" opacity="0.28"/><circle cx="582.7" cy="1027.1" r="1" fill="#5aa0e0" opacity="0.26"/><circle cx="336.7" cy="1043.8" r="0.6" fill="#3f7fc0" opacity="0.20"/><circle cx="1138.5" cy="1036.6" r="0.6" fill="#2f5f90" opacity="0.40"/><circle cx="1261.9" cy="1044.8" r="0.8" fill="#2f5f90" opacity="0.27"/><circle cx="1355.0" cy="1044.3" r="0.6" fill="#2f5f90" opacity="0.23"/><circle cx="1506.8" cy="1047.1" r="1" fill="#2f5f90" opacity="0.20"/><circle cx="990.1" cy="1029.7" r="0.6" fill="#35689a" opacity="0.13"/><circle cx="609.5" cy="1039.1" r="0.8" fill="#4a8fd0" opacity="0.35"/><circle cx="413.8" cy="1048.1" r="0.8" fill="#3f7fc0" opacity="0.22"/><circle cx="624.4" cy="1036.6" r="0.5" fill="#2f5f90" opacity="0.15"/><circle cx="51.0" cy="1032.0" r="1" fill="#3f7fc0" opacity="0.11"/><circle cx="343.8" cy="1046.8" r="1" fill="#2f5f90" opacity="0.26"/><circle cx="358.8" cy="1048.1" r="0.8" fill="#5aa0e0" opacity="0.24"/><circle cx="1289.0" cy="1045.5" r="0.6" fill="#3f7fc0" opacity="0.18"/><circle cx="569.3" cy="1049.9" r="0.8" fill="#3f7fc0" opacity="0.13"/><circle cx="58.5" cy="1034.2" r="1.2" fill="#3f7fc0" opacity="0.25"/><circle cx="1449.8" cy="1041.0" r="0.5" fill="#3f7fc0" opacity="0.33"/><circle cx="432.1" cy="1039.1" r="1.2" fill="#2f5f90" opacity="0.13"/><circle cx="660.4" cy="1036.2" r="0.6" fill="#4a8fd0" opacity="0.22"/><circle cx="1666.1" cy="1030.5" r="0.5" fill="#35689a" opacity="0.40"/><circle cx="99.6" cy="1038.8" r="0.5" fill="#3f7fc0" opacity="0.37"/><circle cx="433.3" cy="1037.8" r="1.2" fill="#5aa0e0" opacity="0.31"/><circle cx="93.7" cy="1028.6" r="1.6" fill="#4a8fd0" opacity="0.10"/><circle cx="1137.2" cy="1032.5" r="1" fill="#3f7fc0" opacity="0.24"/><circle cx="790.8" cy="1034.3" r="0.8" fill="#5aa0e0" opacity="0.14"/><circle cx="637.8" cy="1036.0" r="1.6" fill="#3f7fc0" opacity="0.15"/><circle cx="786.1" cy="1047.8" r="1.6" fill="#4a8fd0" opacity="0.11"/><circle cx="130.7" cy="1040.5" r="0.8" fill="#4a8fd0" opacity="0.38"/><circle cx="1307.6" cy="1048.9" r="0.8" fill="#3f7fc0" opacity="0.37"/><circle cx="759.9" cy="1033.5" r="1.6" fill="#3f7fc0" opacity="0.17"/><circle cx="1055.3" cy="1028.6" r="0.6" fill="#4a8fd0" opacity="0.34"/><circle cx="1199.1" cy="1038.8" r="0.6" fill="#4a8fd0" opacity="0.24"/><circle cx="447.5" cy="1035.3" r="0.6" fill="#2f5f90" opacity="0.11"/><circle cx="1410.5" cy="1033.4" r="0.6" fill="#3f7fc0" opacity="0.18"/><circle cx="534.4" cy="1047.6" r="0.5" fill="#2f5f90" opacity="0.15"/><circle cx="95.5" cy="1047.4" r="1.2" fill="#2f5f90" opacity="0.40"/><circle cx="802.1" cy="1032.2" r="0.8" fill="#35689a" opacity="0.34"/><circle cx="725.9" cy="1031.5" r="0.6" fill="#3f7fc0" opacity="0.40"/><circle cx="655.4" cy="1035.4" r="0.6" fill="#35689a" opacity="0.12"/><circle cx="242.5" cy="1041.0" r="0.8" fill="#35689a" opacity="0.36"/><circle cx="858.1" cy="1036.1" r="1.6" fill="#2f5f90" opacity="0.37"/><circle cx="481.1" cy="1034.0" r="0.5" fill="#4a8fd0" opacity="0.39"/><circle cx="465.1" cy="1029.5" r="1.6" fill="#4a8fd0" opacity="0.16"/><circle cx="1195.5" cy="1029.9" r="0.5" fill="#2f5f90" opacity="0.37"/><circle cx="1227.8" cy="1044.0" r="0.6" fill="#2f5f90" opacity="0.17"/><circle cx="1125.4" cy="1040.7" r="0.6" fill="#4a8fd0" opacity="0.29"/><circle cx="16.9" cy="1042.3" r="1" fill="#3f7fc0" opacity="0.23"/><circle cx="871.0" cy="1033.7" r="0.8" fill="#5aa0e0" opacity="0.37"/><circle cx="151.8" cy="1035.2" r="1.6" fill="#35689a" opacity="0.25"/><circle cx="417.2" cy="1039.1" r="0.8" fill="#35689a" opacity="0.11"/><circle cx="965.9" cy="1046.5" r="0.8" fill="#5aa0e0" opacity="0.27"/><circle cx="1627.5" cy="1026.8" r="0.8" fill="#35689a" opacity="0.33"/><circle cx="1308.9" cy="1046.7" r="1" fill="#3f7fc0" opacity="0.34"/><circle cx="489.8" cy="1027.7" r="1.2" fill="#2f5f90" opacity="0.26"/><circle cx="43.1" cy="1045.1" r="0.6" fill="#3f7fc0" opacity="0.11"/><circle cx="375.8" cy="1029.6" r="0.5" fill="#2f5f90" opacity="0.20"/><circle cx="1372.8" cy="1025.8" r="0.5" fill="#4a8fd0" opacity="0.40"/><circle cx="439.2" cy="1045.9" r="1.2" fill="#2f5f90" opacity="0.28"/><circle cx="400.5" cy="1036.1" r="0.8" fill="#4a8fd0" opacity="0.38"/><circle cx="75.9" cy="1028.1" r="0.8" fill="#35689a" opacity="0.29"/><circle cx="184.9" cy="1028.0" r="0.6" fill="#4a8fd0" opacity="0.27"/><circle cx="1446.6" cy="1028.7" r="1" fill="#5aa0e0" opacity="0.25"/><circle cx="276.1" cy="1045.7" r="1.2" fill="#5aa0e0" opacity="0.22"/><circle cx="1003.0" cy="1040.1" r="0.5" fill="#3f7fc0" opacity="0.23"/><circle cx="1305.2" cy="1033.5" r="0.6" fill="#5aa0e0" opacity="0.37"/><circle cx="1416.3" cy="1039.1" r="0.8" fill="#2f5f90" opacity="0.36"/><circle cx="90.0" cy="1037.9" r="1.2" fill="#4a8fd0" opacity="0.40"/><circle cx="1462.4" cy="1041.6" r="0.5" fill="#2f5f90" opacity="0.22"/><circle cx="315.0" cy="1033.1" r="0.6" fill="#3f7fc0" opacity="0.26"/><circle cx="378.8" cy="1035.5" r="0.8" fill="#5aa0e0" opacity="0.35"/><circle cx="1063.8" cy="1045.2" r="0.5" fill="#2f5f90" opacity="0.11"/><circle cx="446.5" cy="1042.0" r="0.8" fill="#3f7fc0" opacity="0.30"/><circle cx="1043.7" cy="1031.3" r="1" fill="#4a8fd0" opacity="0.10"/><circle cx="1597.5" cy="1032.2" r="0.8" fill="#4a8fd0" opacity="0.21"/><circle cx="202.2" cy="1039.9" r="1" fill="#3f7fc0" opacity="0.39"/><circle cx="783.6" cy="1038.3" r="0.6" fill="#2f5f90" opacity="0.24"/><circle cx="220.7" cy="1032.3" r="0.8" fill="#35689a" opacity="0.28"/><circle cx="408.9" cy="1027.2" r="1" fill="#5aa0e0" opacity="0.19"/><circle cx="1024.7" cy="1039.3" r="1.2" fill="#2f5f90" opacity="0.22"/><circle cx="1193.4" cy="1036.5" r="1" fill="#5aa0e0" opacity="0.20"/><circle cx="787.9" cy="1032.8" r="0.6" fill="#4a8fd0" opacity="0.21"/><circle cx="860.9" cy="1034.6" r="1" fill="#35689a" opacity="0.23"/><circle cx="272.7" cy="1048.8" r="0.8" fill="#5aa0e0" opacity="0.28"/><circle cx="453.5" cy="1047.0" r="0.6" fill="#3f7fc0" opacity="0.19"/><circle cx="266.4" cy="1026.7" r="1.6" fill="#3f7fc0" opacity="0.21"/><circle cx="868.6" cy="1045.9" r="0.8" fill="#3f7fc0" opacity="0.34"/><circle cx="875.2" cy="1049.7" r="1.2" fill="#4a8fd0" opacity="0.34"/><circle cx="700.1" cy="1041.7" r="0.6" fill="#2f5f90" opacity="0.32"/><circle cx="1026.1" cy="1031.9" r="1.6" fill="#5aa0e0" opacity="0.27"/><circle cx="451.4" cy="1040.8" r="1.2" fill="#4a8fd0" opacity="0.39"/><circle cx="693.9" cy="1027.6" r="0.8" fill="#2f5f90" opacity="0.35"/><circle cx="197.3" cy="1034.9" r="1" fill="#35689a" opacity="0.15"/><circle cx="1466.2" cy="1040.2" r="0.8" fill="#5aa0e0" opacity="0.37"/><circle cx="483.9" cy="1033.8" r="0.8" fill="#2f5f90" opacity="0.23"/><circle cx="1000.3" cy="1041.2" r="0.5" fill="#5aa0e0" opacity="0.35"/><circle cx="639.5" cy="1032.5" r="1" fill="#4a8fd0" opacity="0.20"/><circle cx="731.9" cy="1034.4" r="0.6" fill="#35689a" opacity="0.13"/><circle cx="544.1" cy="1046.1" r="1.6" fill="#35689a" opacity="0.18"/><circle cx="343.2" cy="1035.7" r="0.5" fill="#35689a" opacity="0.11"/><circle cx="949.1" cy="1037.4" r="1" fill="#2f5f90" opacity="0.35"/><circle cx="1041.6" cy="1035.9" r="1.6" fill="#5aa0e0" opacity="0.27"/><circle cx="654.4" cy="1033.9" r="1" fill="#5aa0e0" opacity="0.32"/><circle cx="1592.5" cy="1041.9" r="1" fill="#5aa0e0" opacity="0.17"/><circle cx="629.0" cy="1035.0" r="1" fill="#4a8fd0" opacity="0.40"/><circle cx="1478.1" cy="1049.1" r="0.8" fill="#2f5f90" opacity="0.23"/><circle cx="1510.6" cy="1039.7" r="1.2" fill="#3f7fc0" opacity="0.27"/><circle cx="286.8" cy="1033.0" r="0.5" fill="#2f5f90" opacity="0.36"/><circle cx="295.0" cy="1041.4" r="0.8" fill="#2f5f90" opacity="0.32"/><circle cx="1492.1" cy="1035.5" r="0.6" fill="#2f5f90" opacity="0.27"/><circle cx="349.1" cy="1047.3" r="0.8" fill="#2f5f90" opacity="0.16"/><circle cx="1013.3" cy="1033.8" r="1.2" fill="#3f7fc0" opacity="0.30"/><circle cx="1162.1" cy="1025.3" r="0.5" fill="#2f5f90" opacity="0.20"/><circle cx="6.6" cy="1032.6" r="1.6" fill="#3f7fc0" opacity="0.13"/><circle cx="1122.4" cy="1029.9" r="0.8" fill="#2f5f90" opacity="0.35"/><circle cx="446.9" cy="1041.2" r="1" fill="#4a8fd0" opacity="0.26"/><circle cx="965.1" cy="1035.3" r="0.5" fill="#2f5f90" opacity="0.15"/><circle cx="1276.0" cy="1027.7" r="0.5" fill="#2f5f90" opacity="0.12"/><circle cx="823.9" cy="1036.7" r="0.8" fill="#3f7fc0" opacity="0.36"/><circle cx="1092.2" cy="1042.1" r="1" fill="#4a8fd0" opacity="0.20"/><circle cx="594.5" cy="1029.2" r="0.8" fill="#2f5f90" opacity="0.30"/><circle cx="105.9" cy="1029.8" r="1" fill="#3f7fc0" opacity="0.22"/><circle cx="369.7" cy="1034.9" r="1.6" fill="#5aa0e0" opacity="0.41"/><circle cx="91.7" cy="1031.0" r="0.6" fill="#2f5f90" opacity="0.11"/><circle cx="1435.9" cy="1032.9" r="1.6" fill="#35689a" opacity="0.36"/><circle cx="702.9" cy="1031.3" r="0.8" fill="#3f7fc0" opacity="0.41"/><circle cx="408.1" cy="1034.7" r="1.2" fill="#5aa0e0" opacity="0.29"/><circle cx="519.4" cy="1046.9" r="0.8" fill="#4a8fd0" opacity="0.11"/><circle cx="146.9" cy="1029.2" r="0.8" fill="#35689a" opacity="0.16"/><circle cx="665.3" cy="1034.1" r="0.8" fill="#5aa0e0" opacity="0.27"/><circle cx="564.3" cy="1041.3" r="0.5" fill="#35689a" opacity="0.24"/><circle cx="930.5" cy="1034.7" r="0.8" fill="#4a8fd0" opacity="0.19"/><circle cx="731.8" cy="1032.0" r="0.5" fill="#4a8fd0" opacity="0.21"/><circle cx="406.2" cy="1028.2" r="0.6" fill="#4a8fd0" opacity="0.19"/><circle cx="932.4" cy="1036.7" r="1.6" fill="#4a8fd0" opacity="0.36"/><circle cx="618.1" cy="1030.4" r="0.8" fill="#2f5f90" opacity="0.22"/><circle cx="349.5" cy="1048.8" r="1" fill="#5aa0e0" opacity="0.17"/><circle cx="1134.5" cy="1048.6" r="0.8" fill="#5aa0e0" opacity="0.29"/><circle cx="987.1" cy="1034.2" r="0.6" fill="#2f5f90" opacity="0.23"/><circle cx="357.1" cy="1046.8" r="0.5" fill="#3f7fc0" opacity="0.32"/><circle cx="911.6" cy="1031.8" r="1.6" fill="#3f7fc0" opacity="0.34"/><circle cx="1104.6" cy="1039.2" r="0.8" fill="#3f7fc0" opacity="0.10"/><circle cx="1167.0" cy="1044.4" r="0.6" fill="#3f7fc0" opacity="0.20"/><circle cx="114.4" cy="1047.8" r="1.6" fill="#35689a" opacity="0.26"/><circle cx="323.9" cy="1043.0" r="0.5" fill="#4a8fd0" opacity="0.17"/><circle cx="1372.3" cy="1035.0" r="0.8" fill="#5aa0e0" opacity="0.23"/><circle cx="1302.0" cy="1047.1" r="1.6" fill="#35689a" opacity="0.38"/><circle cx="296.3" cy="1034.2" r="1.6" fill="#35689a" opacity="0.31"/><circle cx="1506.9" cy="1025.6" r="1.2" fill="#4a8fd0" opacity="0.32"/><circle cx="1679.9" cy="1035.0" r="1.2" fill="#35689a" opacity="0.13"/><circle cx="193.6" cy="1047.8" r="1.2" fill="#3f7fc0" opacity="0.17"/><circle cx="679.8" cy="1040.2" r="0.8" fill="#35689a" opacity="0.16"/><circle cx="262.4" cy="1043.5" r="1" fill="#4a8fd0" opacity="0.20"/><circle cx="948.4" cy="1030.7" r="0.8" fill="#35689a" opacity="0.33"/><circle cx="1555.2" cy="1041.8" r="1" fill="#3f7fc0" opacity="0.21"/><circle cx="187.9" cy="1044.1" r="1.2" fill="#3f7fc0" opacity="0.19"/><circle cx="1470.2" cy="1039.6" r="1.2" fill="#4a8fd0" opacity="0.12"/><circle cx="1144.2" cy="1025.9" r="0.8" fill="#35689a" opacity="0.17"/><circle cx="1259.2" cy="1027.2" r="1.2" fill="#2f5f90" opacity="0.34"/><circle cx="1392.3" cy="1032.0" r="0.5" fill="#5aa0e0" opacity="0.21"/><circle cx="743.5" cy="1033.5" r="1" fill="#5aa0e0" opacity="0.34"/><circle cx="854.5" cy="1041.9" r="0.6" fill="#2f5f90" opacity="0.24"/><circle cx="1422.2" cy="1044.5" r="0.8" fill="#3f7fc0" opacity="0.34"/><circle cx="1599.9" cy="1045.6" r="1" fill="#2f5f90" opacity="0.18"/><circle cx="275.0" cy="1044.5" r="0.6" fill="#4a8fd0" opacity="0.27"/><circle cx="1618.9" cy="1029.2" r="0.8" fill="#4a8fd0" opacity="0.23"/><circle cx="1069.3" cy="1028.4" r="1.2" fill="#5aa0e0" opacity="0.33"/><circle cx="399.6" cy="1031.0" r="1" fill="#4a8fd0" opacity="0.32"/><circle cx="1572.2" cy="1033.8" r="0.8" fill="#4a8fd0" opacity="0.14"/><circle cx="987.1" cy="1031.0" r="1.2" fill="#2f5f90" opacity="0.36"/><circle cx="713.4" cy="1048.5" r="1.2" fill="#2f5f90" opacity="0.31"/><circle cx="1645.2" cy="1046.0" r="0.8" fill="#3f7fc0" opacity="0.37"/><circle cx="1159.4" cy="1025.3" r="0.8" fill="#3f7fc0" opacity="0.17"/><circle cx="1505.0" cy="1032.6" r="0.5" fill="#5aa0e0" opacity="0.32"/><circle cx="1617.6" cy="1029.0" r="0.8" fill="#35689a" opacity="0.25"/><circle cx="486.4" cy="1038.9" r="0.5" fill="#5aa0e0" opacity="0.10"/><circle cx="141.1" cy="1042.9" r="1.2" fill="#3f7fc0" opacity="0.28"/><circle cx="1083.8" cy="1048.9" r="0.8" fill="#2f5f90" opacity="0.16"/><circle cx="540.6" cy="1034.0" r="0.5" fill="#2f5f90" opacity="0.31"/><circle cx="1571.2" cy="1041.3" r="0.8" fill="#3f7fc0" opacity="0.31"/><circle cx="232.9" cy="1025.7" r="1.6" fill="#4a8fd0" opacity="0.23"/><circle cx="497.8" cy="1029.6" r="1.2" fill="#4a8fd0" opacity="0.27"/><circle cx="171.7" cy="1043.0" r="0.8" fill="#35689a" opacity="0.34"/><circle cx="637.4" cy="1041.2" r="0.8" fill="#35689a" opacity="0.20"/><circle cx="229.1" cy="1048.0" r="1.6" fill="#4a8fd0" opacity="0.37"/><circle cx="97.0" cy="1027.7" r="1.6" fill="#5aa0e0" opacity="0.30"/><circle cx="1520.7" cy="1048.6" r="0.8" fill="#4a8fd0" opacity="0.24"/><circle cx="1672.7" cy="1040.1" r="1.2" fill="#4a8fd0" opacity="0.13"/><circle cx="274.9" cy="1036.1" r="0.8" fill="#3f7fc0" opacity="0.13"/><circle cx="1429.1" cy="1037.0" r="0.6" fill="#3f7fc0" opacity="0.33"/><circle cx="53.8" cy="1040.3" r="1.6" fill="#5aa0e0" opacity="0.35"/><circle cx="240.5" cy="1026.8" r="0.5" fill="#5aa0e0" opacity="0.26"/><circle cx="1496.2" cy="1026.6" r="0.5" fill="#4a8fd0" opacity="0.31"/><circle cx="1518.7" cy="1029.1" r="0.8" fill="#2f5f90" opacity="0.10"/><circle cx="1134.4" cy="1039.2" r="0.8" fill="#35689a" opacity="0.13"/><circle cx="868.2" cy="1035.7" r="1" fill="#4a8fd0" opacity="0.39"/><circle cx="1636.9" cy="1049.0" r="1" fill="#3f7fc0" opacity="0.13"/><circle cx="1214.3" cy="1033.3" r="1.2" fill="#2f5f90" opacity="0.20"/><circle cx="707.5" cy="1034.2" r="1.2" fill="#35689a" opacity="0.31"/><circle cx="1453.6" cy="1038.3" r="1.2" fill="#4a8fd0" opacity="0.11"/><circle cx="373.8" cy="1043.5" r="1.2" fill="#2f5f90" opacity="0.13"/><circle cx="625.0" cy="1039.5" r="0.8" fill="#4a8fd0" opacity="0.22"/><circle cx="948.9" cy="1034.9" r="0.5" fill="#4a8fd0" opacity="0.17"/><circle cx="920.8" cy="1027.8" r="1.6" fill="#3f7fc0" opacity="0.37"/><circle cx="315.1" cy="1041.8" r="1.2" fill="#2f5f90" opacity="0.26"/><circle cx="769.7" cy="1038.5" r="1.2" fill="#2f5f90" opacity="0.14"/><circle cx="1527.5" cy="1039.2" r="1.6" fill="#3f7fc0" opacity="0.23"/><circle cx="1344.6" cy="1028.4" r="1" fill="#3f7fc0" opacity="0.28"/><circle cx="1052.7" cy="1049.0" r="1" fill="#5aa0e0" opacity="0.13"/><circle cx="914.4" cy="1049.2" r="0.6" fill="#3f7fc0" opacity="0.28"/><circle cx="229.8" cy="1044.4" r="0.5" fill="#3f7fc0" opacity="0.23"/><circle cx="625.5" cy="1025.4" r="1" fill="#5aa0e0" opacity="0.41"/><circle cx="503.9" cy="1042.7" r="0.8" fill="#3f7fc0" opacity="0.39"/><circle cx="1043.6" cy="1046.8" r="1" fill="#35689a" opacity="0.14"/><circle cx="282.2" cy="1043.6" r="0.8" fill="#3f7fc0" opacity="0.36"/><circle cx="1387.1" cy="1028.1" r="0.8" fill="#2f5f90" opacity="0.26"/><circle cx="1592.7" cy="1043.0" r="0.5" fill="#35689a" opacity="0.36"/><circle cx="167.4" cy="1038.7" r="1.6" fill="#3f7fc0" opacity="0.29"/><circle cx="1554.6" cy="1041.9" r="0.8" fill="#5aa0e0" opacity="0.21"/><circle cx="35.8" cy="1049.7" r="0.8" fill="#3f7fc0" opacity="0.14"/><circle cx="819.9" cy="1026.8" r="0.8" fill="#2f5f90" opacity="0.16"/><circle cx="1564.2" cy="1046.8" r="1.2" fill="#4a8fd0" opacity="0.22"/><circle cx="988.4" cy="1031.3" r="1.2" fill="#35689a" opacity="0.34"/><circle cx="1593.9" cy="1025.3" r="0.8" fill="#5aa0e0" opacity="0.42"/><circle cx="843.0" cy="1046.8" r="1.6" fill="#3f7fc0" opacity="0.37"/><circle cx="306.2" cy="1045.5" r="1.2" fill="#5aa0e0" opacity="0.29"/><circle cx="1625.4" cy="1042.3" r="0.8" fill="#2f5f90" opacity="0.23"/><circle cx="868.6" cy="1034.0" r="1" fill="#4a8fd0" opacity="0.17"/><circle cx="989.9" cy="1026.1" r="0.6" fill="#5aa0e0" opacity="0.36"/><circle cx="556.7" cy="1036.7" r="0.8" fill="#35689a" opacity="0.20"/><circle cx="973.0" cy="1033.3" r="0.5" fill="#2f5f90" opacity="0.18"/><circle cx="76.2" cy="1028.6" r="1.2" fill="#5aa0e0" opacity="0.15"/><circle cx="459.2" cy="1037.5" r="0.8" fill="#2f5f90" opacity="0.21"/><circle cx="887.3" cy="1048.9" r="1.2" fill="#2f5f90" opacity="0.11"/><circle cx="1516.4" cy="1027.4" r="0.6" fill="#2f5f90" opacity="0.35"/><circle cx="1066.2" cy="1034.1" r="0.8" fill="#4a8fd0" opacity="0.35"/><circle cx="1466.3" cy="1048.5" r="1.2" fill="#35689a" opacity="0.12"/><circle cx="1242.4" cy="1037.7" r="1.2" fill="#2f5f90" opacity="0.18"/><circle cx="1202.4" cy="1033.4" r="1.2" fill="#35689a" opacity="0.21"/><circle cx="1484.6" cy="1044.6" r="1" fill="#4a8fd0" opacity="0.22"/><circle cx="1359.5" cy="1049.9" r="0.6" fill="#3f7fc0" opacity="0.14"/><circle cx="1493.1" cy="1041.8" r="0.8" fill="#2f5f90" opacity="0.24"/><circle cx="1297.5" cy="1048.2" r="1" fill="#35689a" opacity="0.12"/><circle cx="1209.4" cy="1031.3" r="1" fill="#35689a" opacity="0.28"/><circle cx="123.5" cy="1029.8" r="0.5" fill="#35689a" opacity="0.29"/><circle cx="975.2" cy="1049.7" r="0.8" fill="#5aa0e0" opacity="0.41"/><circle cx="1211.6" cy="1048.0" r="1.6" fill="#4a8fd0" opacity="0.26"/><circle cx="463.5" cy="1031.4" r="0.5" fill="#35689a" opacity="0.34"/><circle cx="398.0" cy="1025.5" r="0.5" fill="#4a8fd0" opacity="0.23"/><circle cx="1500.0" cy="1032.1" r="1" fill="#4a8fd0" opacity="0.31"/><circle cx="406.1" cy="1026.4" r="0.6" fill="#3f7fc0" opacity="0.29"/><circle cx="123.4" cy="1045.4" r="1" fill="#4a8fd0" opacity="0.21"/><circle cx="8.5" cy="1031.8" r="1.2" fill="#35689a" opacity="0.38"/><circle cx="1550.5" cy="1030.3" r="0.8" fill="#3f7fc0" opacity="0.38"/><circle cx="1090.2" cy="1035.1" r="1.2" fill="#4a8fd0" opacity="0.36"/><circle cx="96.5" cy="1035.4" r="0.5" fill="#2f5f90" opacity="0.13"/><circle cx="562.0" cy="1037.4" r="1" fill="#5aa0e0" opacity="0.23"/><circle cx="1467.2" cy="1025.6" r="0.8" fill="#35689a" opacity="0.28"/><circle cx="94.1" cy="1040.3" r="1.2" fill="#4a8fd0" opacity="0.37"/><circle cx="157.0" cy="1028.9" r="0.6" fill="#3f7fc0" opacity="0.27"/><circle cx="601.2" cy="1034.0" r="0.8" fill="#2f5f90" opacity="0.27"/><circle cx="1454.7" cy="1028.8" r="1" fill="#4a8fd0" opacity="0.28"/><circle cx="1245.0" cy="1031.4" r="1.2" fill="#3f7fc0" opacity="0.25"/><circle cx="1303.7" cy="1032.7" r="1.6" fill="#5aa0e0" opacity="0.28"/><circle cx="939.6" cy="1034.0" r="1" fill="#4a8fd0" opacity="0.40"/><circle cx="424.9" cy="1039.0" r="0.5" fill="#35689a" opacity="0.31"/><circle cx="253.0" cy="1040.7" r="0.8" fill="#3f7fc0" opacity="0.34"/><circle cx="1574.1" cy="1040.6" r="0.5" fill="#2f5f90" opacity="0.12"/><circle cx="344.3" cy="1044.4" r="0.8" fill="#35689a" opacity="0.40"/><circle cx="1239.2" cy="1047.6" r="1.6" fill="#4a8fd0" opacity="0.34"/><circle cx="887.9" cy="1033.8" r="1.2" fill="#5aa0e0" opacity="0.18"/><circle cx="358.1" cy="1047.8" r="1.6" fill="#4a8fd0" opacity="0.22"/><circle cx="544.0" cy="1047.6" r="0.5" fill="#3f7fc0" opacity="0.31"/><circle cx="109.9" cy="1041.1" r="0.8" fill="#35689a" opacity="0.32"/><circle cx="100.8" cy="1039.1" r="0.8" fill="#5aa0e0" opacity="0.39"/><circle cx="1587.5" cy="1040.7" r="0.6" fill="#3f7fc0" opacity="0.11"/><circle cx="440.7" cy="1035.8" r="0.6" fill="#35689a" opacity="0.21"/><circle cx="1275.4" cy="1041.1" r="0.8" fill="#5aa0e0" opacity="0.38"/><circle cx="363.9" cy="1039.2" r="0.6" fill="#35689a" opacity="0.25"/><circle cx="1603.2" cy="1028.4" r="0.8" fill="#35689a" opacity="0.19"/><circle cx="6.6" cy="1046.8" r="0.6" fill="#2f5f90" opacity="0.15"/><circle cx="1004.0" cy="1036.3" r="1" fill="#4a8fd0" opacity="0.12"/><circle cx="1430.3" cy="1043.4" r="0.5" fill="#5aa0e0" opacity="0.35"/><circle cx="306.3" cy="1046.6" r="0.8" fill="#3f7fc0" opacity="0.32"/><circle cx="255.2" cy="1047.8" r="0.6" fill="#4a8fd0" opacity="0.39"/><circle cx="844.4" cy="1033.8" r="1.6" fill="#5aa0e0" opacity="0.15"/><circle cx="151.6" cy="1033.5" r="1.2" fill="#35689a" opacity="0.33"/><circle cx="1645.8" cy="1025.8" r="0.6" fill="#3f7fc0" opacity="0.16"/><circle cx="63.6" cy="1037.6" r="0.6" fill="#3f7fc0" opacity="0.28"/><circle cx="1223.9" cy="1026.2" r="0.8" fill="#3f7fc0" opacity="0.12"/><circle cx="202.4" cy="1037.2" r="0.6" fill="#3f7fc0" opacity="0.27"/><circle cx="300.7" cy="1042.1" r="0.6" fill="#2f5f90" opacity="0.30"/><circle cx="841.2" cy="1027.8" r="0.8" fill="#3f7fc0" opacity="0.37"/><circle cx="587.1" cy="1030.4" r="0.6" fill="#35689a" opacity="0.33"/><circle cx="1182.0" cy="1025.4" r="0.8" fill="#3f7fc0" opacity="0.12"/><circle cx="330.0" cy="1026.2" r="1.6" fill="#35689a" opacity="0.28"/><circle cx="448.9" cy="1033.1" r="0.5" fill="#2f5f90" opacity="0.31"/><circle cx="474.0" cy="1033.3" r="0.8" fill="#35689a" opacity="0.41"/><circle cx="670.8" cy="1033.0" r="0.8" fill="#4a8fd0" opacity="0.22"/><circle cx="650.3" cy="1034.6" r="0.8" fill="#3f7fc0" opacity="0.36"/><circle cx="401.7" cy="1037.5" r="0.8" fill="#5aa0e0" opacity="0.32"/><circle cx="1664.9" cy="1045.6" r="1.2" fill="#2f5f90" opacity="0.14"/><circle cx="1317.1" cy="1047.7" r="0.5" fill="#2f5f90" opacity="0.23"/><circle cx="544.9" cy="1041.2" r="1" fill="#5aa0e0" opacity="0.31"/><circle cx="1632.3" cy="1025.0" r="1.2" fill="#5aa0e0" opacity="0.31"/><circle cx="857.0" cy="1039.8" r="0.8" fill="#5aa0e0" opacity="0.18"/><circle cx="596.7" cy="1026.6" r="1" fill="#35689a" opacity="0.19"/><circle cx="121.0" cy="1044.9" r="1.2" fill="#2f5f90" opacity="0.17"/><circle cx="1285.9" cy="1031.6" r="1.6" fill="#35689a" opacity="0.25"/><circle cx="877.0" cy="1036.9" r="0.6" fill="#3f7fc0" opacity="0.42"/><circle cx="1557.9" cy="1038.2" r="1" fill="#4a8fd0" opacity="0.17"/><circle cx="1366.4" cy="1031.0" r="0.6" fill="#5aa0e0" opacity="0.15"/><circle cx="298.6" cy="1048.7" r="1.6" fill="#3f7fc0" opacity="0.39"/></g>
<g fill="#fff"><path d="M10.4 1020.2L22 1018.5V1028.7H10.4z"/><path d="M23.2 1018.3L37.2 1016.3V1028.7H23.2z"/><path d="M10.4 1029.9H22V1040.2L10.4 1038.5z"/><path d="M23.2 1029.9H37.2V1042.3L23.2 1040.3z"/></g>
<g transform="translate(80.5,1029.5)"><ellipse cx="0" cy="0.8" rx="17.8" ry="8.6" transform="rotate(-44)" fill="none" stroke="#e0a80c" stroke-width="2.2"/><text x="1" y="12.8" font-size="46" font-weight="700" fill="url(#gIE)" text-anchor="middle" textLength="25" lengthAdjust="spacingAndGlyphs" stroke="#1a7fc8" stroke-width="0.4">e</text><ellipse cx="0" cy="0.8" rx="17.8" ry="8.6" transform="rotate(-44)" fill="none" stroke="#f6c520" stroke-width="2.4" pathLength="100" stroke-dasharray="0 46 46 8"/></g>
<g transform="translate(127,1017)"><path d="M1 3Q1 1.5 2.5 1.5H10l1.5 2H29Q30.5 3.5 30.5 5V26H1z" fill="#f3dc8e" stroke="#c9a84a" stroke-width="0.7"/><rect x="4.5" y="0.8" width="7" height="2.4" fill="#fff"/><rect x="5" y="1" width="2.6" height="1.8" fill="#18a838"/><rect x="12" y="2.4" width="7" height="2.4" fill="#fff"/><rect x="12.5" y="2.6" width="2.6" height="1.8" fill="#d83a2a"/><rect x="20" y="4.2" width="7" height="2.4" fill="#fff"/><rect x="20.5" y="4.4" width="2.6" height="1.8" fill="#2a8ae0"/><path d="M0.8 8.5Q0.8 7 2.3 7H30Q31.5 7 31.5 8.5V25.5Q31.5 27 30 27H2.3Q0.8 27 0.8 25.5z" fill="url(#gFolder)" stroke="#c9a84a" stroke-width="0.7"/><path d="M4.5 27.8V20Q4.5 17.5 7 17.5H25Q27.5 17.5 27.5 20V27.8H22.5V22.5H9.5V27.8z" fill="#8ccaf0" stroke="#3a8ad0" stroke-width="0.8"/><path d="M6 19.5H26" stroke="#d8f0ff" stroke-width="1.4"/></g>
<rect x="176.5" y="1011.5" width="57" height="37" fill="#ffffff" fill-opacity="0.17" stroke="#e0e0e0" stroke-opacity="0.6" stroke-width="1"/>
<defs><linearGradient id="gGlobe2" x1="0" y1="0" x2="0.3" y2="1"><stop offset="0" stop-color="#5cc4f2"/><stop offset="0.45" stop-color="#2a80d0"/><stop offset="1" stop-color="#162a78"/></linearGradient><linearGradient id="gFoxB" x1="0" y1="0" x2="0.6" y2="1"><stop offset="0" stop-color="#f08a28"/><stop offset="0.5" stop-color="#e8601c"/><stop offset="1" stop-color="#f0901e"/></linearGradient><linearGradient id="gTail" x1="0" y1="0" x2="0" y2="1"><stop offset="0" stop-color="#fff2a0"/><stop offset="0.5" stop-color="#fcd22a"/><stop offset="1" stop-color="#f49a1e"/></linearGradient></defs>
<g transform="translate(204.7,1030)"><circle cx="1.8" cy="-3.6" r="11.2" fill="url(#gGlobe2)"/><path d="M9 -11.6Q14.2 -6.5 14.7 -0.5Q14.6 5.5 11 9.6Q12.6 3 10.6 -2.5Q9.6 -7 7 -10z" fill="url(#gTail)"/><path d="M-12.4 -11.6Q-10.4 -9.2 -8.6 -9.6Q-6.4 -10.6 -3.8 -10.8Q-4 -8.4 -2.4 -7.2L-0.4 -5.6Q-1.4 -3.4 -3.4 -3.3L-4.6 -1Q-6 0.6 -5 2.1Q-1.6 4 3.4 2.6Q1.4 5.4 -2.4 5.8Q1 8.6 4.6 7.6Q9 6 10.4 0.4Q11.4 -3 10.4 -6.4Q13.4 -1 12.6 4Q11.4 10.4 5.4 13.6Q-0.4 16 -6.6 13.2Q-12.6 10 -14.4 3.6Q-15.6 -3.6 -11.6 -9.2z" fill="url(#gFoxB)"/><path d="M-3.6 -6.4L-1 -5.4L-2.6 -4.4z" fill="#fff" opacity="0.85"/><path d="M12.6 4Q11.4 10.4 5.4 13.6Q-0.4 16 -6.6 13.2Q0 14.4 5 11.4Q10 8.4 10.4 0.4Q12.4 2 12.6 4z" fill="#f8a420" opacity="0.8"/></g>
<defs><radialGradient id="gTB2" cx="0.45" cy="0.3" r="0.8"><stop offset="0" stop-color="#58aaf0"/><stop offset="0.6" stop-color="#1e62c8"/><stop offset="1" stop-color="#0e2e86"/></radialGradient></defs>
<g transform="translate(267.7,1029.6)"><path d="M-13 -6Q-17 2 -12.5 9.5Q-8 15 -1 15.6L5 15.6L8 3L-11 -4z" fill="#123a94"/><path d="M-11.8 -3.4L1 -7.5L10 -1L7.4 4L3.9 11.6L-13.4 4z" fill="#f4f1ea"/><path d="M-11.8 -3.4L-5 1.4L8.6 0.6M-5 1.4L-13.4 4" fill="none" stroke="#b8b4a8" stroke-width="0.6"/><path d="M-13.4 4L3.9 11.6L4.8 9.6L-12.9 2.4z" fill="#d4d0c4" opacity="0.8"/><path d="M-12.2 -3.8Q-13 -9.5 -7.5 -13Q1 -17.6 9.6 -11.8Q16.6 -5.4 15.2 3.6Q13.6 11.6 5 15.7Q7.6 10 7.4 4.2Q9.6 1.4 9 -1.4Q7 -5 2.4 -6.6Q-3.4 -8 -7 -5.4L-10.4 -1.8z" fill="url(#gTB2)"/><path d="M-9.4 -8.6Q-6.6 -11.8 -2.6 -11.2L-6 -7.6Q-8.4 -7.4 -9.8 -5.4z" fill="#b4dcf8"/><circle cx="-6.4" cy="-9" r="0.95" fill="#f4a21a"/><circle cx="-6.4" cy="-9" r="0.4" fill="#222"/><path d="M-10.6 -1.6L-8.2 -4.6L-9 -0.8z" fill="#e8ecf4"/><path d="M3 -11.4Q9.6 -8 11 -0.4M6.4 -12.6Q13.6 -7 13 2.4M10 -10.4Q15.8 -3.6 13.6 6M11.4 3Q11 9 7.4 13" fill="none" stroke="#0e2e86" stroke-opacity="0.5" stroke-width="0.8"/></g>
<g transform="translate(329.2,1030.2)"><circle r="14.8" fill="#fbc116"/><path d="M0 0L-12.82 -7.4A14.8 14.8 0 0 1 12.82 -7.4z" fill="#dc4a3c"/><path d="M-12.82 -7.4A14.8 14.8 0 0 1 12.82 -7.4H0z" fill="#dc4a3c"/><path d="M0 0L-12.82 -7.4A14.8 14.8 0 0 0 0 14.8z" fill="#1da462"/><path d="M-12.82 -7.4A14.8 14.8 0 0 0 0 14.8L6.4 3.7L-6.4 3.7z" fill="#1da462"/><path d="M12.82 -7.4H0L6.4 3.7L0 14.8A14.8 14.8 0 0 0 12.82 -7.4z" fill="#fbc116"/><circle r="6.9" fill="#fff"/><circle r="5.4" fill="#4a8af4"/></g>
<rect x="362.5" y="1011.5" width="57.5" height="37" fill="#ffffff" fill-opacity="0.24" stroke="#e0e0e0" stroke-opacity="0.6" stroke-width="1"/>
<g transform="translate(375,1014)"><rect x="1" y="1" width="30" height="29.6" rx="3" fill="url(#gOO)" stroke="#1a64a8" stroke-width="2"/><path d="M2.2 14Q5 11.5 9.5 11.8Q11.5 5 14 2.2H19.5Q15 5 13.5 10.5Q12.5 14 9.5 14.2Q5 14 2.2 18z" fill="#3a8ad4"/><path d="M2.2 17Q6 13.6 10 14Q13 13.5 14 9Q15.5 4 20 2.2H24Q18 4.5 16.5 10Q15 15.5 11 16Q6 16 2.2 21z" fill="#fdfdfd"/><path d="M3.5 29.4Q7 21 17 19.5L19.4 18.8Q20.5 10 30 4.6V13Q23.5 17 22 22.6L19.5 23.4Q12 24.5 9.8 29.4z" fill="#f47a10"/><path d="M3.5 29.4Q7 21 17 19.5L19.4 18.8Q20.5 10 30 4.6V7.6Q22.5 12 21.4 20.4L18.5 21.2Q9.5 22.5 6 29.4z" fill="#fcc420"/><rect x="1" y="1" width="30" height="29.6" rx="3" fill="none" stroke="#1a64a8" stroke-width="2"/></g>
<rect x="424.4" y="1011.6" width="57.4" height="36.8" fill="#ffffff" fill-opacity="0.4" stroke="#ffffff" stroke-width="1.5"/>
<g transform="translate(437,1014)"><rect x="0" y="0" width="32.2" height="32" fill="#d3ecf9"/><path d="M0 19.6Q16 17.6 32.2 23.4V32H0z" fill="#e9f5fc"/><rect x="0" y="0" width="32.2" height="32" fill="none" stroke="#f0f8fd" stroke-width="0.8"/><path d="M9.6 5Q9.8 3 12 3H22Q23.6 3 23.6 4.6V7.8H16V12.4H23.2V16.2H16V24.8L9.6 23.8z" fill="url(#gFo)"/><path d="M9.6 5Q9.8 3 12 3L16 7.8V24.8L9.6 23.8z" fill="#b85a12" opacity="0.5"/><path d="M12.4 6Q15.5 8 15 16Q14.6 21 13 24.2L16 24.8V7.8z" fill="#f8b85a" opacity="0.7"/></g>
<text x="456" y="1043.7" font-size="4.9" fill="#0a96e8" font-weight="700" text-anchor="start" textLength="9" lengthAdjust="spacingAndGlyphs" stroke="#0a96e8" stroke-width="0.3">360</text>
<path d="M1420.7 1033.2l4-4 4 4z" fill="#fff"/>
<g transform="translate(1440.7,1022.9)"><rect x="0" y="0" width="16.3" height="16.2" rx="2" fill="#f4f4f8"/><path d="M4.2 2.6v9.6q0 1.6 1.8 1.6h1.4M2 6h5.2" stroke="#10108a" stroke-width="2" fill="none"/><path d="M11.6 6.2v7.8" stroke="#10108a" stroke-width="2.2"/><circle cx="9.3" cy="5.2" r="1.5" fill="#22d822"/><circle cx="13" cy="2.8" r="1.5" fill="#22d822"/></g>
<g transform="translate(1472.6,1030.8)"><ellipse cx="0" cy="-4.4" rx="2.5" ry="3.2" fill="#62c820" stroke="#3a8a10" stroke-width="0.5" transform="rotate(0)"/><ellipse cx="0" cy="-4.4" rx="2.5" ry="3.2" fill="#62c820" stroke="#3a8a10" stroke-width="0.5" transform="rotate(45)"/><ellipse cx="0" cy="-4.4" rx="2.5" ry="3.2" fill="#62c820" stroke="#3a8a10" stroke-width="0.5" transform="rotate(90)"/><ellipse cx="0" cy="-4.4" rx="2.5" ry="3.2" fill="#62c820" stroke="#3a8a10" stroke-width="0.5" transform="rotate(135)"/><ellipse cx="0" cy="-4.4" rx="2.5" ry="3.2" fill="#62c820" stroke="#3a8a10" stroke-width="0.5" transform="rotate(180)"/><ellipse cx="0" cy="-4.4" rx="2.5" ry="3.2" fill="#62c820" stroke="#3a8a10" stroke-width="0.5" transform="rotate(225)"/><ellipse cx="0" cy="-4.4" rx="2.5" ry="3.2" fill="#62c820" stroke="#3a8a10" stroke-width="0.5" transform="rotate(270)"/><ellipse cx="0" cy="-4.4" rx="2.5" ry="3.2" fill="#62c820" stroke="#3a8a10" stroke-width="0.5" transform="rotate(315)"/><circle r="1.7" fill="#f6e82a"/></g>
<g transform="translate(1497.4,1030.4)" fill="#f2f2f2"><path d="M-3.8 -7l3.8 2.4-3.8 2.4-3.8-2.4z"/><path d="M3.8 -7l3.8 2.4-3.8 2.4-3.8-2.4z"/><path d="M-3.8 -1.8l3.8 2.4-3.8 2.4-3.8-2.4z"/><path d="M3.8 -1.8l3.8 2.4-3.8 2.4-3.8-2.4z"/><path d="M-3.6 4.2l3.6 2.3 2-1.2v1.4l-2 1.3-3.6-2.3z"/><circle cx="4.3" cy="4.4" r="3.7" fill="#3cb84a" stroke="#e8f8e8" stroke-width="0.5"/><path d="M2.5 4.4l1.3 1.4 2.4-2.7" stroke="#fff" stroke-width="1.1" fill="none"/></g>
<g fill="none" stroke="#fff" stroke-width="1.2"><rect x="1519.4" y="1026.4" width="8.4" height="6.6"/><path d="M1523.6 1033v2.6M1520.4 1036.2h6.6"/><rect x="1514.8" y="1024.6" width="2.8" height="4" rx="1"/><path d="M1516.2 1028.6v6.8h2.4"/></g>
<g fill="#fff"><path d="M1537.6 1028.4h2.4l3.4-3.6v12.4l-3.4-3.6h-2.4z"/></g><g fill="none" stroke="#fff" stroke-width="1"><path d="M1545.4 1028.8q1.4 2.2 0 4.4"/><path d="M1547.6 1027q2.6 4 0 8" opacity="0.8"/><path d="M1549.8 1025.4q3.6 5.6 0 11.2" opacity="0.6"/></g>
<text x="1567.5" y="1034.7" font-size="12" fill="#ffffff" font-weight="400" text-anchor="start" textLength="22.3" lengthAdjust="spacingAndGlyphs" >ENG</text>
<text x="1621.4" y="1027" font-size="12.4" fill="#ffffff" font-weight="400" text-anchor="start" textLength="25.6" lengthAdjust="spacingAndGlyphs" >17:01</text>
<text x="1607" y="1044" font-size="12.4" fill="#ffffff" font-weight="400" text-anchor="start" textLength="54.3" lengthAdjust="spacingAndGlyphs" >29.09.2016</text>
</svg>
</body></html>
